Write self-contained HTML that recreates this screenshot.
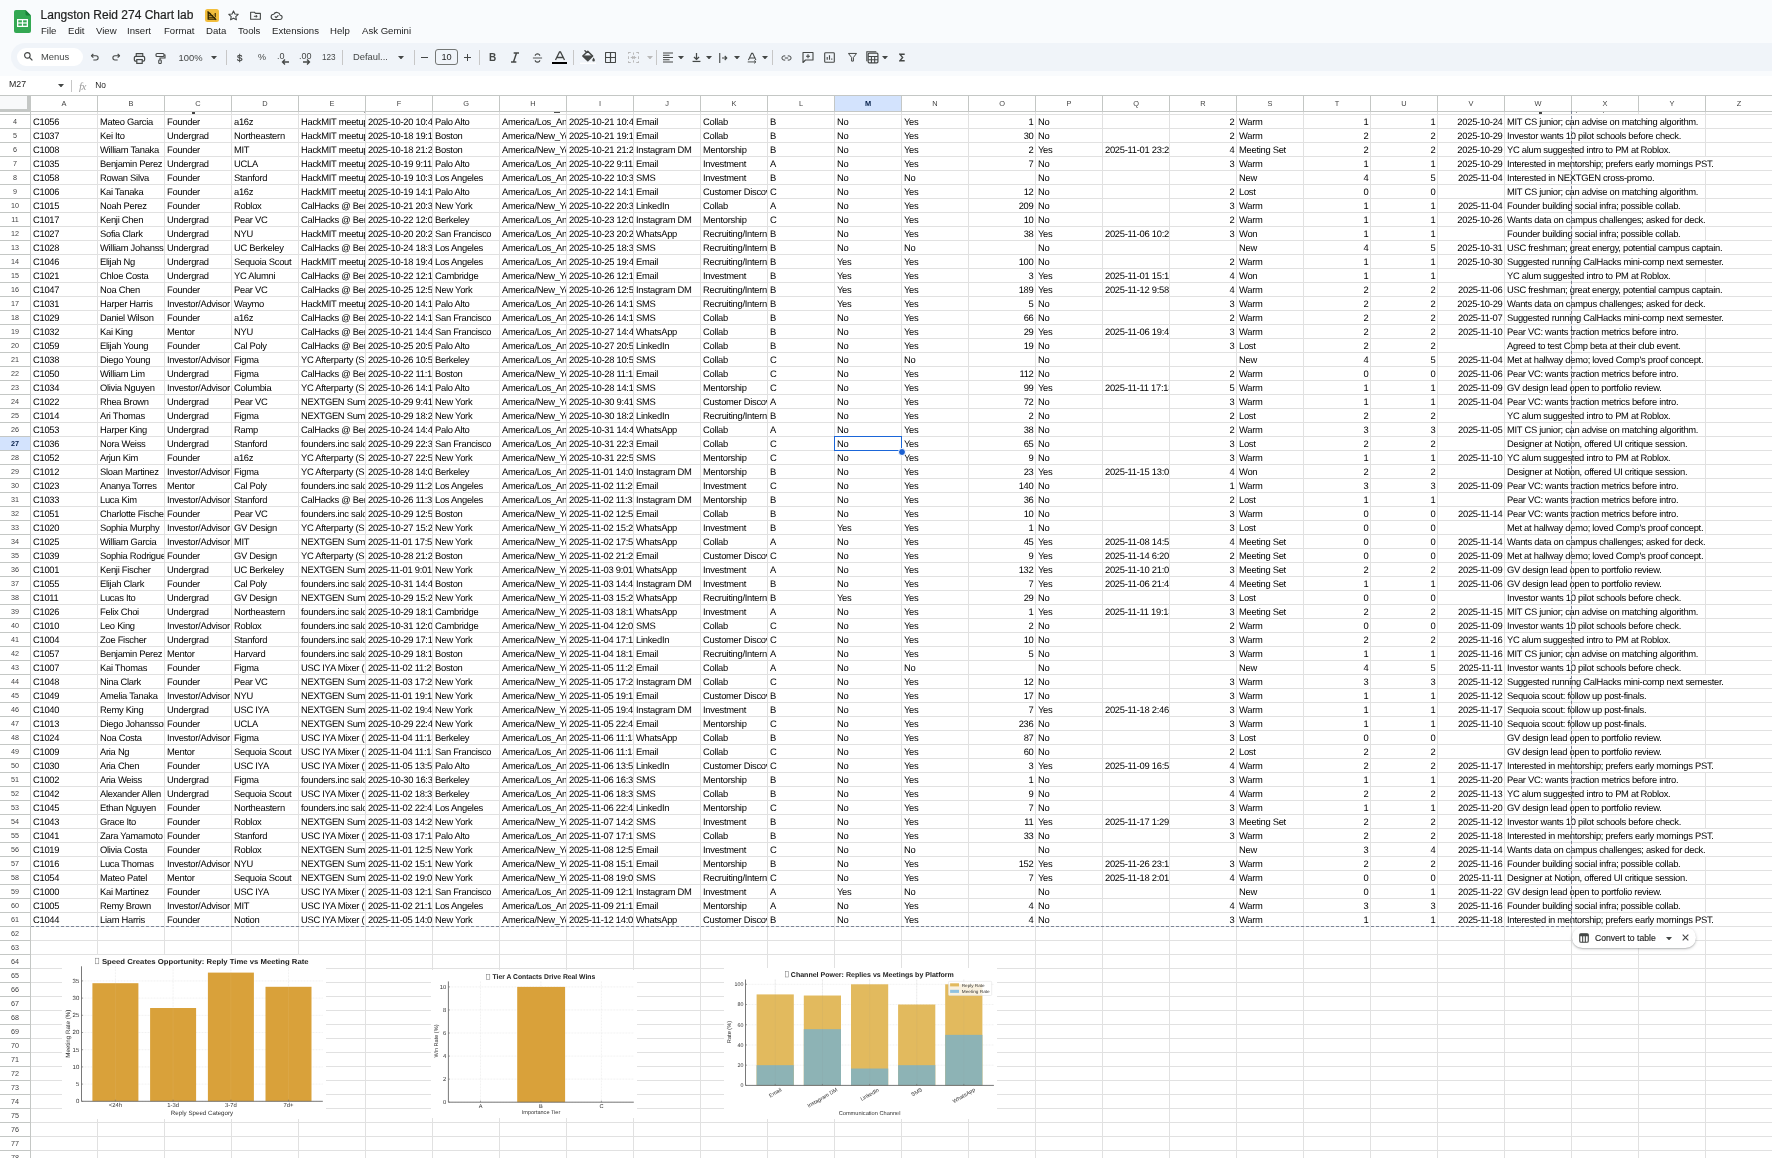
<!DOCTYPE html><html><head><meta charset="utf-8"><style>
*{margin:0;padding:0;box-sizing:border-box}
html,body{width:1772px;height:1158px;overflow:hidden;background:#fff;font-family:"Liberation Sans",sans-serif;color:#1f1f1f}
.a{position:absolute}
#top{position:absolute;left:0;top:0;width:1772px;height:76px;background:#f9fbfd}
.menu{position:absolute;top:25px;font-size:9.6px;color:#1f1f1f;white-space:nowrap}
#tb{position:absolute;left:11px;top:43px;width:1800px;height:28px;border-radius:14px;background:#f0f4f9}
.sep{position:absolute;top:50px;width:1px;height:15px;background:#c7c7c7}
.ic{position:absolute}
.t{position:absolute;z-index:2;font-size:9.4px;letter-spacing:-0.28px;text-rendering:geometricPrecision;line-height:14px;height:14px;white-space:nowrap;overflow:hidden;color:#000}
.r{text-align:right}
.vl{position:absolute;width:1px;background:#e1e1e1}
.hl{position:absolute;height:1px;background:#e1e1e1}
.hdr{position:absolute;top:96px;height:15px;line-height:15px;text-align:center;font-size:7.4px;color:#444}
.rn{position:absolute;left:0;width:30px;text-align:center;font-size:7.2px;line-height:16px;color:#444}
#root{position:absolute;left:0;top:0;width:1772px;height:1158px;will-change:transform}
</style></head><body><div id="root">
<div id="top"></div><svg class="a" style="left:14px;top:10px" width="17" height="23" viewBox="0 0 17 23">
<path d="M2 0 H11.5 L17 5.5 V21 a2 2 0 0 1 -2 2 H2 a2 2 0 0 1 -2 -2 V2 a2 2 0 0 1 2 -2z" fill="#34a853"/>
<path d="M11.5 0 L17 5.5 H13 a1.5 1.5 0 0 1 -1.5 -1.5z" fill="#188038"/>
<rect x="3" y="9" width="11" height="8" fill="#fff"/>
<rect x="4.3" y="10.3" width="3.6" height="2.1" fill="#34a853"/><rect x="9.1" y="10.3" width="3.6" height="2.1" fill="#34a853"/>
<rect x="4.3" y="13.6" width="3.6" height="2.1" fill="#34a853"/><rect x="9.1" y="13.6" width="3.6" height="2.1" fill="#34a853"/>
</svg><div class="a" style="left:40.6px;top:8.1px;font-size:12px;color:#1f1f1f;white-space:nowrap;-webkit-text-stroke:0.2px #1f1f1f">Langston Reid 274 Chart lab</div><svg class="a" style="left:205px;top:9px" width="14" height="13" viewBox="0 0 14 13"><rect x="0" y="0" width="14" height="13" rx="2.5" fill="#f2be3c"/>
<path d="M3.2 3v7.2h7.6" fill="none" stroke="#2b2100" stroke-width="1.3"/><path d="M3.2 4.3h3M3.2 6.3h5.5M3.2 8.3h7.3M10.2 4v5" stroke="#2b2100" stroke-width="1.1"/><path d="M2.6 2.3L11.2 10.9" stroke="#2b2100" stroke-width="1.2"/><path d="M3.6 1.6L11.9 9.9" stroke="#f2be3c" stroke-width="0.7"/></svg><svg class="a" style="left:227px;top:9px" width="13" height="13" viewBox="0 0 24 24"><path d="M12 3.5l2.6 5.6 6.1.7-4.5 4.1 1.2 6-5.4-3-5.4 3 1.2-6-4.5-4.1 6.1-.7z" fill="none" stroke="#444746" stroke-width="2" stroke-linejoin="round"/></svg><svg class="a" style="left:249px;top:9px" width="13" height="13" viewBox="0 0 24 24"><path d="M3 6h7l2 2h9v11H3z" fill="none" stroke="#444746" stroke-width="2" stroke-linejoin="round"/><path d="M9 13.5h6M12.5 11l2.5 2.5-2.5 2.5" fill="none" stroke="#444746" stroke-width="1.8"/></svg><svg class="a" style="left:270px;top:10px" width="13" height="11" viewBox="0 0 24 21"><path d="M6.5 18h12a4 4 0 0 0 .5-8A6.5 6.5 0 0 0 6.8 8.2 4.9 4.9 0 0 0 6.5 18z" fill="none" stroke="#444746" stroke-width="2.1"/><path d="M8.8 12.2l2.4 2.4 4.4-4.4" fill="none" stroke="#444746" stroke-width="2.1"/></svg><div class="menu" style="left:41px">File</div><div class="menu" style="left:68px">Edit</div><div class="menu" style="left:96px">View</div><div class="menu" style="left:127px">Insert</div><div class="menu" style="left:164px">Format</div><div class="menu" style="left:206px">Data</div><div class="menu" style="left:238px">Tools</div><div class="menu" style="left:272px">Extensions</div><div class="menu" style="left:330px">Help</div><div class="menu" style="left:362px">Ask Gemini</div><div id="tb"></div><div class="a" style="left:17px;top:48px;width:66px;height:18px;border-radius:9px;background:#fff"></div><svg class="a" style="left:23px;top:51px" width="11" height="11" viewBox="0 0 24 24"><circle cx="9.5" cy="9.5" r="6" fill="none" stroke="#444746" stroke-width="2.6"/><path d="M14 14l6.5 6.5" stroke="#444746" stroke-width="2.8"/></svg><div class="a" style="left:41px;top:51px;font-size:9.4px;color:#444746">Menus</div><svg class="a" style="left:90px;top:52.400000000000006px" width="10" height="10" viewBox="0 0 24 24"><path d="M8 4.5L3.5 9L8 13.5" fill="none" stroke="#444746" stroke-width="2.6" stroke-linejoin="round"/><path d="M4 9h10.5a5 5 0 0 1 0 10H8" fill="none" stroke="#444746" stroke-width="2.6"/></svg><svg class="a" style="left:111px;top:52.400000000000006px" width="10" height="10" viewBox="0 0 24 24"><path d="M16 4.5L20.5 9L16 13.5" fill="none" stroke="#444746" stroke-width="2.6" stroke-linejoin="round"/><path d="M20 9H9.5a5 5 0 0 0 0 10H16" fill="none" stroke="#444746" stroke-width="2.6"/></svg><svg class="a" style="left:133px;top:52.2px" width="13" height="13" viewBox="0 0 24 24"><path d="M6 8V3h12v5" fill="none" stroke="#444746" stroke-width="2"/><rect x="2.5" y="8" width="19" height="9" rx="2.5" fill="none" stroke="#444746" stroke-width="2.2"/><rect x="7" y="14" width="10" height="7" fill="#f0f4f9" stroke="#444746" stroke-width="2.2"/></svg><svg class="a" style="left:154px;top:52.2px" width="12" height="13" viewBox="0 0 24 24"><rect x="4" y="2" width="16" height="6" rx="2" fill="none" stroke="#444746" stroke-width="2.2"/><path d="M20 5h2v6h-10v4" fill="none" stroke="#444746" stroke-width="2.2"/><rect x="9.5" y="15" width="5" height="7" rx="1.5" fill="none" stroke="#444746" stroke-width="2.2"/></svg><div class="a" style="left:178.5px;top:51.5px;font-size:9.4px;color:#444746">100%</div><svg class="a" style="left:210.5px;top:55.8px" width="6" height="3.5" viewBox="0 0 7 4"><path d="M0 0h7L3.5 4z" fill="#444746"/></svg><div class="sep" style="left:226px"></div><div class="sep" style="left:342px"></div><div class="sep" style="left:414px"></div><div class="sep" style="left:479px"></div><div class="sep" style="left:573px"></div><div class="sep" style="left:656px"></div><div class="sep" style="left:772px"></div><div class="a" style="left:237px;top:51.5px;font-size:9.6px;color:#444746;-webkit-text-stroke:0.3px #444746">$</div><div class="a" style="left:258px;top:52px;font-size:9px;color:#444746">%</div><svg class="a" style="left:277px;top:51.2px" width="13" height="14" viewBox="0 0 13 14"><text x="0" y="8" font-size="9" font-family="Liberation Sans" fill="#444746">.0</text><path d="M12 11H5.5M8 8.5L5.5 11L8 13.5" fill="none" stroke="#444746" stroke-width="1.3"/></svg><svg class="a" style="left:299px;top:51.2px" width="13" height="14" viewBox="0 0 13 14"><text x="0" y="8" font-size="9" font-family="Liberation Sans" fill="#444746">.00</text><path d="M4 11h6.5M8 8.5L10.5 11L8 13.5" fill="none" stroke="#444746" stroke-width="1.3"/></svg><div class="a" style="left:322px;top:53px;font-size:8.2px;color:#444746">123</div><div class="a" style="left:353px;top:51px;font-size:9.4px;color:#444746">Defaul...</div><svg class="a" style="left:397.5px;top:55.8px" width="6" height="3.5" viewBox="0 0 7 4"><path d="M0 0h7L3.5 4z" fill="#444746"/></svg><div class="a" style="left:421px;top:57px;width:7px;height:1.3px;background:#444746"></div><div class="a" style="left:435px;top:49px;width:23px;height:16px;border:1px solid #747775;border-radius:3px;font-size:9.2px;line-height:14px;text-align:center;color:#1f1f1f">10</div><div class="a" style="left:464px;top:57px;width:7px;height:1.3px;background:#444746"></div><div class="a" style="left:467px;top:54px;width:1.3px;height:7px;background:#444746"></div><div class="a" style="left:489px;top:51.5px;font-size:10px;font-weight:bold;color:#444746">B</div><svg class="a" style="left:511px;top:51.7px" width="8" height="11" viewBox="0 0 9 12"><path d="M3 1h6M0 11h6M6.2 1L2.8 11" fill="none" stroke="#444746" stroke-width="1.6"/></svg><svg class="a" style="left:532px;top:52.2px" width="11" height="12" viewBox="0 0 24 24"><path d="M2 12h20" stroke="#444746" stroke-width="2"/><path d="M17 7c0-2.5-2.5-4-5-4s-5 1.5-5 4M7 17c0 2.5 2.5 4 5 4s5-1.5 5-4" fill="none" stroke="#444746" stroke-width="2.4"/></svg><svg class="a" style="left:552px;top:51.2px" width="15" height="13" viewBox="0 0 15 13"><path d="M3.5 9L7.5 1H8.5L12.5 9M5 6.5h6" fill="none" stroke="#444746" stroke-width="1.3"/><rect x="0" y="11" width="15" height="2" fill="#000"/></svg><svg class="a" style="left:580px;top:49.7px" width="16" height="14" viewBox="0 0 16 14"><path d="M2.8 6L7.8 1.2L12.6 6L7.8 10.8z" fill="none" stroke="#444746" stroke-width="1.5" stroke-linejoin="round"/><path d="M3.2 6.2h9" stroke="#444746" stroke-width="1.5"/><path d="M3.5 6.5L7.8 10.5L12 6.5z" fill="#444746"/><path d="M13.6 7.6c.9 1.4 1.3 2.1 1.3 2.7a1.3 1.3 0 0 1 -2.6 0c0-.6.4-1.3 1.3-2.7z" fill="#444746"/><path d="M4.5 0.3L6.8 2.4" stroke="#444746" stroke-width="1.3"/><rect x="0" y="12.6" width="16" height="1.6" fill="#fff"/></svg><svg class="a" style="left:605px;top:52.2px" width="11" height="11" viewBox="0 0 24 24"><rect x="1" y="1" width="22" height="22" rx="2" fill="none" stroke="#444746" stroke-width="2.6"/><path d="M12 1v22M1 12h22" stroke="#444746" stroke-width="2.6"/></svg><svg class="a" style="left:628px;top:52.2px" width="11" height="11" viewBox="0 0 24 24"><path d="M1 4V1h5M18 1h5v3M1 20v3h5M18 23h5v-3M1 9v6M23 9v6M12 1v5M12 18v5M6 12h12M9 9l3 3-3 3M15 9l-3 3 3 3" fill="none" stroke="#b9b9b9" stroke-width="2.2"/></svg><svg class="a" style="left:646.5px;top:55.8px" width="6" height="3.5" viewBox="0 0 7 4"><path d="M0 0h7L3.5 4z" fill="#b9b9b9"/></svg><svg class="a" style="left:663px;top:52.2px" width="10" height="11" viewBox="0 0 20 20"><path d="M0 1h20M0 5.5h13M0 10h20M0 14.5h13M0 19h20" stroke="#444746" stroke-width="2.2"/></svg><svg class="a" style="left:677.5px;top:55.8px" width="6" height="3.5" viewBox="0 0 7 4"><path d="M0 0h7L3.5 4z" fill="#444746"/></svg><svg class="a" style="left:692px;top:51.2px" width="9" height="13" viewBox="0 0 16 18"><path d="M8 1v11M3.5 8L8 12.5L12.5 8" fill="none" stroke="#444746" stroke-width="2.2"/><path d="M1 16h14" stroke="#444746" stroke-width="2.2"/></svg><svg class="a" style="left:705.5px;top:55.8px" width="6" height="3.5" viewBox="0 0 7 4"><path d="M0 0h7L3.5 4z" fill="#444746"/></svg><svg class="a" style="left:719px;top:52.2px" width="9" height="12" viewBox="0 0 18 20"><path d="M1.5 0v20M6 10h9M11.5 6l4 4-4 4" fill="none" stroke="#444746" stroke-width="2.2"/></svg><svg class="a" style="left:733.5px;top:55.8px" width="6" height="3.5" viewBox="0 0 7 4"><path d="M0 0h7L3.5 4z" fill="#444746"/></svg><svg class="a" style="left:747px;top:51.2px" width="10" height="14" viewBox="0 0 14 16"><path d="M2 11L6.5 1.5H8L12.5 11M4 8h8" fill="none" stroke="#444746" stroke-width="1.5"/><path d="M1 13.5h11M10 11.5l2.5 2-2.5 2" fill="none" stroke="#444746" stroke-width="1.3"/></svg><svg class="a" style="left:761.5px;top:55.8px" width="6" height="3.5" viewBox="0 0 7 4"><path d="M0 0h7L3.5 4z" fill="#444746"/></svg><svg class="a" style="left:781px;top:53.2px" width="11" height="10" viewBox="0 0 24 24"><path d="M9 7H6a5 5 0 0 0 0 10h3M15 7h3a5 5 0 0 1 0 10h-3M8 12h8" fill="none" stroke="#444746" stroke-width="2.4"/></svg><svg class="a" style="left:802px;top:51.2px" width="12" height="13" viewBox="0 0 24 24"><path d="M2 2h20v15H7l-5 5z" fill="none" stroke="#444746" stroke-width="2.2" stroke-linejoin="round"/><path d="M12 5.5v8M8 9.5h8" stroke="#444746" stroke-width="2.2"/></svg><svg class="a" style="left:824px;top:52.2px" width="11" height="11" viewBox="0 0 24 24"><rect x="1.5" y="1.5" width="21" height="21" rx="2" fill="none" stroke="#444746" stroke-width="2.4"/><path d="M7 17V11M12 17V7M17 17v-3" stroke="#444746" stroke-width="2.4"/></svg><svg class="a" style="left:848px;top:52.2px" width="9" height="11" viewBox="0 0 20 22"><path d="M1 2h18l-7 9v8h-4v-8z" fill="none" stroke="#444746" stroke-width="2.2" stroke-linejoin="round"/></svg><svg class="a" style="left:866px;top:51.2px" width="13" height="13" viewBox="0 0 24 24"><rect x="4" y="4" width="18" height="18" rx="2" fill="none" stroke="#444746" stroke-width="2.2"/><path d="M4 10h18M4 16h18M10 10v12M16 10v12" stroke="#444746" stroke-width="2"/><path d="M1.5 19V1.5H19" fill="none" stroke="#444746" stroke-width="2"/></svg><svg class="a" style="left:881.5px;top:55.8px" width="6" height="3.5" viewBox="0 0 7 4"><path d="M0 0h7L3.5 4z" fill="#444746"/></svg><svg class="a" style="left:899px;top:53.0px" width="6.5" height="9" viewBox="0 0 16 20"><path d="M14 2H2l7 8-7 8h12" fill="none" stroke="#444746" stroke-width="3.2" stroke-linejoin="miter"/></svg><div class="a" style="left:9px;top:79px;font-size:8.8px;color:#1f1f1f">M27</div><svg class="a" style="left:57.5px;top:83.8px" width="6" height="3.5" viewBox="0 0 7 4"><path d="M0 0h7L3.5 4z" fill="#444746"/></svg><div class="a" style="left:71px;top:80px;width:1px;height:12px;background:#c7c7c7"></div><div class="a" style="left:79px;top:79.5px;font-size:11px;font-style:italic;font-family:'Liberation Serif',serif;color:#9a9a9a;letter-spacing:-0.5px">fx</div><div class="a" style="left:95.3px;top:79.5px;font-size:8.4px;color:#1f1f1f">No</div><div class="a" style="left:0;top:95px;width:1772px;height:1px;background:#c4c7c5"></div><div class="a" style="left:0;top:111px;width:1772px;height:1px;background:#c4c7c5"></div><div class="a" style="left:0;top:96px;width:29px;height:15px;background:#f8f9fa"></div><div class="a" style="left:27px;top:96px;width:3px;height:16px;background:#c4c7c5"></div><div class="a" style="left:0;top:109px;width:30px;height:3px;background:#c4c7c5"></div><div class="a" style="left:834px;top:96px;width:67px;height:15px;background:#d3e3fd"></div><div class="a" style="left:30px;top:96px;width:1px;height:15px;background:#c4c7c5"></div><div class="hdr" style="left:31px;width:66px">A</div><div class="a" style="left:97px;top:96px;width:1px;height:15px;background:#c4c7c5"></div><div class="hdr" style="left:98px;width:66px">B</div><div class="a" style="left:164px;top:96px;width:1px;height:15px;background:#c4c7c5"></div><div class="hdr" style="left:165px;width:66px">C</div><div class="a" style="left:231px;top:96px;width:1px;height:15px;background:#c4c7c5"></div><div class="hdr" style="left:232px;width:66px">D</div><div class="a" style="left:298px;top:96px;width:1px;height:15px;background:#c4c7c5"></div><div class="hdr" style="left:299px;width:66px">E</div><div class="a" style="left:365px;top:96px;width:1px;height:15px;background:#c4c7c5"></div><div class="hdr" style="left:366px;width:66px">F</div><div class="a" style="left:432px;top:96px;width:1px;height:15px;background:#c4c7c5"></div><div class="hdr" style="left:433px;width:66px">G</div><div class="a" style="left:499px;top:96px;width:1px;height:15px;background:#c4c7c5"></div><div class="hdr" style="left:500px;width:66px">H</div><div class="a" style="left:566px;top:96px;width:1px;height:15px;background:#c4c7c5"></div><div class="hdr" style="left:567px;width:66px">I</div><div class="a" style="left:633px;top:96px;width:1px;height:15px;background:#c4c7c5"></div><div class="hdr" style="left:634px;width:66px">J</div><div class="a" style="left:700px;top:96px;width:1px;height:15px;background:#c4c7c5"></div><div class="hdr" style="left:701px;width:66px">K</div><div class="a" style="left:767px;top:96px;width:1px;height:15px;background:#c4c7c5"></div><div class="hdr" style="left:768px;width:66px">L</div><div class="a" style="left:834px;top:96px;width:1px;height:15px;background:#c4c7c5"></div><div class="hdr" style="left:835px;width:66px ;font-weight:bold;color:#041e49">M</div><div class="a" style="left:901px;top:96px;width:1px;height:15px;background:#c4c7c5"></div><div class="hdr" style="left:902px;width:66px">N</div><div class="a" style="left:968px;top:96px;width:1px;height:15px;background:#c4c7c5"></div><div class="hdr" style="left:969px;width:66px">O</div><div class="a" style="left:1035px;top:96px;width:1px;height:15px;background:#c4c7c5"></div><div class="hdr" style="left:1036px;width:66px">P</div><div class="a" style="left:1102px;top:96px;width:1px;height:15px;background:#c4c7c5"></div><div class="hdr" style="left:1103px;width:66px">Q</div><div class="a" style="left:1169px;top:96px;width:1px;height:15px;background:#c4c7c5"></div><div class="hdr" style="left:1170px;width:66px">R</div><div class="a" style="left:1236px;top:96px;width:1px;height:15px;background:#c4c7c5"></div><div class="hdr" style="left:1237px;width:66px">S</div><div class="a" style="left:1303px;top:96px;width:1px;height:15px;background:#c4c7c5"></div><div class="hdr" style="left:1304px;width:66px">T</div><div class="a" style="left:1370px;top:96px;width:1px;height:15px;background:#c4c7c5"></div><div class="hdr" style="left:1371px;width:66px">U</div><div class="a" style="left:1437px;top:96px;width:1px;height:15px;background:#c4c7c5"></div><div class="hdr" style="left:1438px;width:66px">V</div><div class="a" style="left:1504px;top:96px;width:1px;height:15px;background:#c4c7c5"></div><div class="hdr" style="left:1505px;width:66px">W</div><div class="a" style="left:1571px;top:96px;width:1px;height:15px;background:#c4c7c5"></div><div class="hdr" style="left:1572px;width:66px">X</div><div class="a" style="left:1638px;top:96px;width:1px;height:15px;background:#c4c7c5"></div><div class="hdr" style="left:1639px;width:66px">Y</div><div class="a" style="left:1705px;top:96px;width:1px;height:15px;background:#c4c7c5"></div><div class="hdr" style="left:1706px;width:66px">Z</div><div class="hl" style="left:30px;top:114px;width:1742px"></div><div class="hl" style="left:0;top:114px;width:30px;background:#c4c7c5"></div><div class="hl" style="left:30px;top:128px;width:1742px"></div><div class="hl" style="left:0;top:128px;width:30px;background:#c4c7c5"></div><div class="hl" style="left:30px;top:142px;width:1742px"></div><div class="hl" style="left:0;top:142px;width:30px;background:#c4c7c5"></div><div class="hl" style="left:30px;top:156px;width:1742px"></div><div class="hl" style="left:0;top:156px;width:30px;background:#c4c7c5"></div><div class="hl" style="left:30px;top:170px;width:1742px"></div><div class="hl" style="left:0;top:170px;width:30px;background:#c4c7c5"></div><div class="hl" style="left:30px;top:184px;width:1742px"></div><div class="hl" style="left:0;top:184px;width:30px;background:#c4c7c5"></div><div class="hl" style="left:30px;top:198px;width:1742px"></div><div class="hl" style="left:0;top:198px;width:30px;background:#c4c7c5"></div><div class="hl" style="left:30px;top:212px;width:1742px"></div><div class="hl" style="left:0;top:212px;width:30px;background:#c4c7c5"></div><div class="hl" style="left:30px;top:226px;width:1742px"></div><div class="hl" style="left:0;top:226px;width:30px;background:#c4c7c5"></div><div class="hl" style="left:30px;top:240px;width:1742px"></div><div class="hl" style="left:0;top:240px;width:30px;background:#c4c7c5"></div><div class="hl" style="left:30px;top:254px;width:1742px"></div><div class="hl" style="left:0;top:254px;width:30px;background:#c4c7c5"></div><div class="hl" style="left:30px;top:268px;width:1742px"></div><div class="hl" style="left:0;top:268px;width:30px;background:#c4c7c5"></div><div class="hl" style="left:30px;top:282px;width:1742px"></div><div class="hl" style="left:0;top:282px;width:30px;background:#c4c7c5"></div><div class="hl" style="left:30px;top:296px;width:1742px"></div><div class="hl" style="left:0;top:296px;width:30px;background:#c4c7c5"></div><div class="hl" style="left:30px;top:310px;width:1742px"></div><div class="hl" style="left:0;top:310px;width:30px;background:#c4c7c5"></div><div class="hl" style="left:30px;top:324px;width:1742px"></div><div class="hl" style="left:0;top:324px;width:30px;background:#c4c7c5"></div><div class="hl" style="left:30px;top:338px;width:1742px"></div><div class="hl" style="left:0;top:338px;width:30px;background:#c4c7c5"></div><div class="hl" style="left:30px;top:352px;width:1742px"></div><div class="hl" style="left:0;top:352px;width:30px;background:#c4c7c5"></div><div class="hl" style="left:30px;top:366px;width:1742px"></div><div class="hl" style="left:0;top:366px;width:30px;background:#c4c7c5"></div><div class="hl" style="left:30px;top:380px;width:1742px"></div><div class="hl" style="left:0;top:380px;width:30px;background:#c4c7c5"></div><div class="hl" style="left:30px;top:394px;width:1742px"></div><div class="hl" style="left:0;top:394px;width:30px;background:#c4c7c5"></div><div class="hl" style="left:30px;top:408px;width:1742px"></div><div class="hl" style="left:0;top:408px;width:30px;background:#c4c7c5"></div><div class="hl" style="left:30px;top:422px;width:1742px"></div><div class="hl" style="left:0;top:422px;width:30px;background:#c4c7c5"></div><div class="hl" style="left:30px;top:436px;width:1742px"></div><div class="hl" style="left:0;top:436px;width:30px;background:#c4c7c5"></div><div class="hl" style="left:30px;top:450px;width:1742px"></div><div class="hl" style="left:0;top:450px;width:30px;background:#c4c7c5"></div><div class="hl" style="left:30px;top:464px;width:1742px"></div><div class="hl" style="left:0;top:464px;width:30px;background:#c4c7c5"></div><div class="hl" style="left:30px;top:478px;width:1742px"></div><div class="hl" style="left:0;top:478px;width:30px;background:#c4c7c5"></div><div class="hl" style="left:30px;top:492px;width:1742px"></div><div class="hl" style="left:0;top:492px;width:30px;background:#c4c7c5"></div><div class="hl" style="left:30px;top:506px;width:1742px"></div><div class="hl" style="left:0;top:506px;width:30px;background:#c4c7c5"></div><div class="hl" style="left:30px;top:520px;width:1742px"></div><div class="hl" style="left:0;top:520px;width:30px;background:#c4c7c5"></div><div class="hl" style="left:30px;top:534px;width:1742px"></div><div class="hl" style="left:0;top:534px;width:30px;background:#c4c7c5"></div><div class="hl" style="left:30px;top:548px;width:1742px"></div><div class="hl" style="left:0;top:548px;width:30px;background:#c4c7c5"></div><div class="hl" style="left:30px;top:562px;width:1742px"></div><div class="hl" style="left:0;top:562px;width:30px;background:#c4c7c5"></div><div class="hl" style="left:30px;top:576px;width:1742px"></div><div class="hl" style="left:0;top:576px;width:30px;background:#c4c7c5"></div><div class="hl" style="left:30px;top:590px;width:1742px"></div><div class="hl" style="left:0;top:590px;width:30px;background:#c4c7c5"></div><div class="hl" style="left:30px;top:604px;width:1742px"></div><div class="hl" style="left:0;top:604px;width:30px;background:#c4c7c5"></div><div class="hl" style="left:30px;top:618px;width:1742px"></div><div class="hl" style="left:0;top:618px;width:30px;background:#c4c7c5"></div><div class="hl" style="left:30px;top:632px;width:1742px"></div><div class="hl" style="left:0;top:632px;width:30px;background:#c4c7c5"></div><div class="hl" style="left:30px;top:646px;width:1742px"></div><div class="hl" style="left:0;top:646px;width:30px;background:#c4c7c5"></div><div class="hl" style="left:30px;top:660px;width:1742px"></div><div class="hl" style="left:0;top:660px;width:30px;background:#c4c7c5"></div><div class="hl" style="left:30px;top:674px;width:1742px"></div><div class="hl" style="left:0;top:674px;width:30px;background:#c4c7c5"></div><div class="hl" style="left:30px;top:688px;width:1742px"></div><div class="hl" style="left:0;top:688px;width:30px;background:#c4c7c5"></div><div class="hl" style="left:30px;top:702px;width:1742px"></div><div class="hl" style="left:0;top:702px;width:30px;background:#c4c7c5"></div><div class="hl" style="left:30px;top:716px;width:1742px"></div><div class="hl" style="left:0;top:716px;width:30px;background:#c4c7c5"></div><div class="hl" style="left:30px;top:730px;width:1742px"></div><div class="hl" style="left:0;top:730px;width:30px;background:#c4c7c5"></div><div class="hl" style="left:30px;top:744px;width:1742px"></div><div class="hl" style="left:0;top:744px;width:30px;background:#c4c7c5"></div><div class="hl" style="left:30px;top:758px;width:1742px"></div><div class="hl" style="left:0;top:758px;width:30px;background:#c4c7c5"></div><div class="hl" style="left:30px;top:772px;width:1742px"></div><div class="hl" style="left:0;top:772px;width:30px;background:#c4c7c5"></div><div class="hl" style="left:30px;top:786px;width:1742px"></div><div class="hl" style="left:0;top:786px;width:30px;background:#c4c7c5"></div><div class="hl" style="left:30px;top:800px;width:1742px"></div><div class="hl" style="left:0;top:800px;width:30px;background:#c4c7c5"></div><div class="hl" style="left:30px;top:814px;width:1742px"></div><div class="hl" style="left:0;top:814px;width:30px;background:#c4c7c5"></div><div class="hl" style="left:30px;top:828px;width:1742px"></div><div class="hl" style="left:0;top:828px;width:30px;background:#c4c7c5"></div><div class="hl" style="left:30px;top:842px;width:1742px"></div><div class="hl" style="left:0;top:842px;width:30px;background:#c4c7c5"></div><div class="hl" style="left:30px;top:856px;width:1742px"></div><div class="hl" style="left:0;top:856px;width:30px;background:#c4c7c5"></div><div class="hl" style="left:30px;top:870px;width:1742px"></div><div class="hl" style="left:0;top:870px;width:30px;background:#c4c7c5"></div><div class="hl" style="left:30px;top:884px;width:1742px"></div><div class="hl" style="left:0;top:884px;width:30px;background:#c4c7c5"></div><div class="hl" style="left:30px;top:898px;width:1742px"></div><div class="hl" style="left:0;top:898px;width:30px;background:#c4c7c5"></div><div class="hl" style="left:30px;top:912px;width:1742px"></div><div class="hl" style="left:0;top:912px;width:30px;background:#c4c7c5"></div><div class="hl" style="left:30px;top:926px;width:1742px"></div><div class="hl" style="left:0;top:926px;width:30px;background:#c4c7c5"></div><div class="hl" style="left:30px;top:940px;width:1742px"></div><div class="hl" style="left:0;top:940px;width:30px;background:#c4c7c5"></div><div class="hl" style="left:30px;top:954px;width:1742px"></div><div class="hl" style="left:0;top:954px;width:30px;background:#c4c7c5"></div><div class="hl" style="left:30px;top:968px;width:1742px"></div><div class="hl" style="left:0;top:968px;width:30px;background:#c4c7c5"></div><div class="hl" style="left:30px;top:982px;width:1742px"></div><div class="hl" style="left:0;top:982px;width:30px;background:#c4c7c5"></div><div class="hl" style="left:30px;top:996px;width:1742px"></div><div class="hl" style="left:0;top:996px;width:30px;background:#c4c7c5"></div><div class="hl" style="left:30px;top:1010px;width:1742px"></div><div class="hl" style="left:0;top:1010px;width:30px;background:#c4c7c5"></div><div class="hl" style="left:30px;top:1024px;width:1742px"></div><div class="hl" style="left:0;top:1024px;width:30px;background:#c4c7c5"></div><div class="hl" style="left:30px;top:1038px;width:1742px"></div><div class="hl" style="left:0;top:1038px;width:30px;background:#c4c7c5"></div><div class="hl" style="left:30px;top:1052px;width:1742px"></div><div class="hl" style="left:0;top:1052px;width:30px;background:#c4c7c5"></div><div class="hl" style="left:30px;top:1066px;width:1742px"></div><div class="hl" style="left:0;top:1066px;width:30px;background:#c4c7c5"></div><div class="hl" style="left:30px;top:1080px;width:1742px"></div><div class="hl" style="left:0;top:1080px;width:30px;background:#c4c7c5"></div><div class="hl" style="left:30px;top:1094px;width:1742px"></div><div class="hl" style="left:0;top:1094px;width:30px;background:#c4c7c5"></div><div class="hl" style="left:30px;top:1108px;width:1742px"></div><div class="hl" style="left:0;top:1108px;width:30px;background:#c4c7c5"></div><div class="hl" style="left:30px;top:1122px;width:1742px"></div><div class="hl" style="left:0;top:1122px;width:30px;background:#c4c7c5"></div><div class="hl" style="left:30px;top:1136px;width:1742px"></div><div class="hl" style="left:0;top:1136px;width:30px;background:#c4c7c5"></div><div class="hl" style="left:30px;top:1150px;width:1742px"></div><div class="hl" style="left:0;top:1150px;width:30px;background:#c4c7c5"></div><div class="vl" style="left:30px;top:112px;height:1046px;background:#c4c7c5"></div><div class="vl" style="left:97px;top:112px;height:1046px;background:#e1e1e1"></div><div class="vl" style="left:164px;top:112px;height:1046px;background:#e1e1e1"></div><div class="vl" style="left:231px;top:112px;height:1046px;background:#e1e1e1"></div><div class="vl" style="left:298px;top:112px;height:1046px;background:#e1e1e1"></div><div class="vl" style="left:365px;top:112px;height:1046px;background:#e1e1e1"></div><div class="vl" style="left:432px;top:112px;height:1046px;background:#e1e1e1"></div><div class="vl" style="left:499px;top:112px;height:1046px;background:#e1e1e1"></div><div class="vl" style="left:566px;top:112px;height:1046px;background:#e1e1e1"></div><div class="vl" style="left:633px;top:112px;height:1046px;background:#e1e1e1"></div><div class="vl" style="left:700px;top:112px;height:1046px;background:#e1e1e1"></div><div class="vl" style="left:767px;top:112px;height:1046px;background:#e1e1e1"></div><div class="vl" style="left:834px;top:112px;height:1046px;background:#e1e1e1"></div><div class="vl" style="left:901px;top:112px;height:1046px;background:#e1e1e1"></div><div class="vl" style="left:968px;top:112px;height:1046px;background:#e1e1e1"></div><div class="vl" style="left:1035px;top:112px;height:1046px;background:#e1e1e1"></div><div class="vl" style="left:1102px;top:112px;height:1046px;background:#e1e1e1"></div><div class="vl" style="left:1169px;top:112px;height:1046px;background:#e1e1e1"></div><div class="vl" style="left:1236px;top:112px;height:1046px;background:#e1e1e1"></div><div class="vl" style="left:1303px;top:112px;height:1046px;background:#e1e1e1"></div><div class="vl" style="left:1370px;top:112px;height:1046px;background:#e1e1e1"></div><div class="vl" style="left:1437px;top:112px;height:1046px;background:#e1e1e1"></div><div class="vl" style="left:1504px;top:112px;height:1046px;background:#e1e1e1"></div><div class="vl" style="left:1571px;top:112px;height:1046px;background:#e1e1e1"></div><div class="vl" style="left:1638px;top:112px;height:1046px;background:#e1e1e1"></div><div class="vl" style="left:1705px;top:112px;height:1046px;background:#e1e1e1"></div><div class="rn" style="top:114px">4</div><div class="rn" style="top:128px">5</div><div class="rn" style="top:142px">6</div><div class="rn" style="top:156px">7</div><div class="rn" style="top:170px">8</div><div class="rn" style="top:184px">9</div><div class="rn" style="top:198px">10</div><div class="rn" style="top:212px">11</div><div class="rn" style="top:226px">12</div><div class="rn" style="top:240px">13</div><div class="rn" style="top:254px">14</div><div class="rn" style="top:268px">15</div><div class="rn" style="top:282px">16</div><div class="rn" style="top:296px">17</div><div class="rn" style="top:310px">18</div><div class="rn" style="top:324px">19</div><div class="rn" style="top:338px">20</div><div class="rn" style="top:352px">21</div><div class="rn" style="top:366px">22</div><div class="rn" style="top:380px">23</div><div class="rn" style="top:394px">24</div><div class="rn" style="top:408px">25</div><div class="rn" style="top:422px">26</div><div class="a" style="left:0;top:437px;width:30px;height:13px;background:#d3e3fd"></div><div class="rn" style="top:436px;font-weight:bold;color:#041e49">27</div><div class="rn" style="top:450px">28</div><div class="rn" style="top:464px">29</div><div class="rn" style="top:478px">30</div><div class="rn" style="top:492px">31</div><div class="rn" style="top:506px">32</div><div class="rn" style="top:520px">33</div><div class="rn" style="top:534px">34</div><div class="rn" style="top:548px">35</div><div class="rn" style="top:562px">36</div><div class="rn" style="top:576px">37</div><div class="rn" style="top:590px">38</div><div class="rn" style="top:604px">39</div><div class="rn" style="top:618px">40</div><div class="rn" style="top:632px">41</div><div class="rn" style="top:646px">42</div><div class="rn" style="top:660px">43</div><div class="rn" style="top:674px">44</div><div class="rn" style="top:688px">45</div><div class="rn" style="top:702px">46</div><div class="rn" style="top:716px">47</div><div class="rn" style="top:730px">48</div><div class="rn" style="top:744px">49</div><div class="rn" style="top:758px">50</div><div class="rn" style="top:772px">51</div><div class="rn" style="top:786px">52</div><div class="rn" style="top:800px">53</div><div class="rn" style="top:814px">54</div><div class="rn" style="top:828px">55</div><div class="rn" style="top:842px">56</div><div class="rn" style="top:856px">57</div><div class="rn" style="top:870px">58</div><div class="rn" style="top:884px">59</div><div class="rn" style="top:898px">60</div><div class="rn" style="top:912px">61</div><div class="rn" style="top:926px">62</div><div class="rn" style="top:940px">63</div><div class="rn" style="top:954px">64</div><div class="rn" style="top:968px">65</div><div class="rn" style="top:982px">66</div><div class="rn" style="top:996px">67</div><div class="rn" style="top:1010px">68</div><div class="rn" style="top:1024px">69</div><div class="rn" style="top:1038px">70</div><div class="rn" style="top:1052px">71</div><div class="rn" style="top:1066px">72</div><div class="rn" style="top:1080px">73</div><div class="rn" style="top:1094px">74</div><div class="rn" style="top:1108px">75</div><div class="rn" style="top:1122px">76</div><div class="rn" style="top:1136px">77</div><div class="rn" style="top:1150px">78</div><div class="t" style="left:33px;top:115px;width:64px">C1056</div><div class="t" style="left:100px;top:115px;width:64px">Mateo Garcia</div><div class="t" style="left:167px;top:115px;width:64px">Founder</div><div class="t" style="left:234px;top:115px;width:64px">a16z</div><div class="t" style="left:301px;top:115px;width:64px">HackMIT meetup</div><div class="t" style="left:368px;top:115px;width:64px">2025-10-20 10:45</div><div class="t" style="left:435px;top:115px;width:64px">Palo Alto</div><div class="t" style="left:502px;top:115px;width:64px">America/Los_Angeles</div><div class="t" style="left:569px;top:115px;width:64px">2025-10-21 10:45</div><div class="t" style="left:636px;top:115px;width:64px">Email</div><div class="t" style="left:703px;top:115px;width:64px">Collab</div><div class="t" style="left:770px;top:115px;width:64px">B</div><div class="t" style="left:837px;top:115px;width:64px">No</div><div class="t" style="left:904px;top:115px;width:64px">Yes</div><div class="t r" style="left:969px;top:115px;width:64.5px">1</div><div class="t" style="left:1038px;top:115px;width:64px">No</div><div class="t r" style="left:1170px;top:115px;width:64.5px">2</div><div class="t" style="left:1239px;top:115px;width:64px">Warm</div><div class="t r" style="left:1304px;top:115px;width:64.5px">1</div><div class="t r" style="left:1371px;top:115px;width:64.5px">1</div><div class="t r" style="left:1438px;top:115px;width:64.5px">2025-10-24</div><div class="t" style="left:1507px;top:115px;width:260px;overflow:visible">MIT CS junior; can advise on matching algorithm.</div><div class="t" style="left:33px;top:129px;width:64px">C1037</div><div class="t" style="left:100px;top:129px;width:64px">Kei Ito</div><div class="t" style="left:167px;top:129px;width:64px">Undergrad</div><div class="t" style="left:234px;top:129px;width:64px">Northeastern</div><div class="t" style="left:301px;top:129px;width:64px">HackMIT meetup</div><div class="t" style="left:368px;top:129px;width:64px">2025-10-18 19:12</div><div class="t" style="left:435px;top:129px;width:64px">Boston</div><div class="t" style="left:502px;top:129px;width:64px">America/New_York</div><div class="t" style="left:569px;top:129px;width:64px">2025-10-21 19:12</div><div class="t" style="left:636px;top:129px;width:64px">Email</div><div class="t" style="left:703px;top:129px;width:64px">Collab</div><div class="t" style="left:770px;top:129px;width:64px">B</div><div class="t" style="left:837px;top:129px;width:64px">No</div><div class="t" style="left:904px;top:129px;width:64px">Yes</div><div class="t r" style="left:969px;top:129px;width:64.5px">30</div><div class="t" style="left:1038px;top:129px;width:64px">No</div><div class="t r" style="left:1170px;top:129px;width:64.5px">2</div><div class="t" style="left:1239px;top:129px;width:64px">Warm</div><div class="t r" style="left:1304px;top:129px;width:64.5px">2</div><div class="t r" style="left:1371px;top:129px;width:64.5px">2</div><div class="t r" style="left:1438px;top:129px;width:64.5px">2025-10-29</div><div class="t" style="left:1507px;top:129px;width:260px;overflow:visible">Investor wants 10 pilot schools before check.</div><div class="t" style="left:33px;top:143px;width:64px">C1008</div><div class="t" style="left:100px;top:143px;width:64px">William Tanaka</div><div class="t" style="left:167px;top:143px;width:64px">Founder</div><div class="t" style="left:234px;top:143px;width:64px">MIT</div><div class="t" style="left:301px;top:143px;width:64px">HackMIT meetup</div><div class="t" style="left:368px;top:143px;width:64px">2025-10-18 21:25</div><div class="t" style="left:435px;top:143px;width:64px">Boston</div><div class="t" style="left:502px;top:143px;width:64px">America/New_York</div><div class="t" style="left:569px;top:143px;width:64px">2025-10-21 21:25</div><div class="t" style="left:636px;top:143px;width:64px">Instagram DM</div><div class="t" style="left:703px;top:143px;width:64px">Mentorship</div><div class="t" style="left:770px;top:143px;width:64px">B</div><div class="t" style="left:837px;top:143px;width:64px">No</div><div class="t" style="left:904px;top:143px;width:64px">Yes</div><div class="t r" style="left:969px;top:143px;width:64.5px">2</div><div class="t" style="left:1038px;top:143px;width:64px">Yes</div><div class="t" style="left:1105px;top:143px;width:64px">2025-11-01 23:25</div><div class="t r" style="left:1170px;top:143px;width:64.5px">4</div><div class="t" style="left:1239px;top:143px;width:64px">Meeting Set</div><div class="t r" style="left:1304px;top:143px;width:64.5px">2</div><div class="t r" style="left:1371px;top:143px;width:64.5px">2</div><div class="t r" style="left:1438px;top:143px;width:64.5px">2025-10-29</div><div class="t" style="left:1507px;top:143px;width:260px;overflow:visible">YC alum suggested intro to PM at Roblox.</div><div class="t" style="left:33px;top:157px;width:64px">C1035</div><div class="t" style="left:100px;top:157px;width:64px">Benjamin Perez</div><div class="t" style="left:167px;top:157px;width:64px">Undergrad</div><div class="t" style="left:234px;top:157px;width:64px">UCLA</div><div class="t" style="left:301px;top:157px;width:64px">HackMIT meetup</div><div class="t" style="left:368px;top:157px;width:64px">2025-10-19 9:11</div><div class="t" style="left:435px;top:157px;width:64px">Palo Alto</div><div class="t" style="left:502px;top:157px;width:64px">America/Los_Angeles</div><div class="t" style="left:569px;top:157px;width:64px">2025-10-22 9:11</div><div class="t" style="left:636px;top:157px;width:64px">Email</div><div class="t" style="left:703px;top:157px;width:64px">Investment</div><div class="t" style="left:770px;top:157px;width:64px">A</div><div class="t" style="left:837px;top:157px;width:64px">No</div><div class="t" style="left:904px;top:157px;width:64px">Yes</div><div class="t r" style="left:969px;top:157px;width:64.5px">7</div><div class="t" style="left:1038px;top:157px;width:64px">No</div><div class="t r" style="left:1170px;top:157px;width:64.5px">3</div><div class="t" style="left:1239px;top:157px;width:64px">Warm</div><div class="t r" style="left:1304px;top:157px;width:64.5px">1</div><div class="t r" style="left:1371px;top:157px;width:64.5px">1</div><div class="t r" style="left:1438px;top:157px;width:64.5px">2025-10-29</div><div class="t" style="left:1507px;top:157px;width:260px;overflow:visible">Interested in mentorship; prefers early mornings PST.</div><div class="t" style="left:33px;top:171px;width:64px">C1058</div><div class="t" style="left:100px;top:171px;width:64px">Rowan Silva</div><div class="t" style="left:167px;top:171px;width:64px">Founder</div><div class="t" style="left:234px;top:171px;width:64px">Stanford</div><div class="t" style="left:301px;top:171px;width:64px">HackMIT meetup</div><div class="t" style="left:368px;top:171px;width:64px">2025-10-19 10:33</div><div class="t" style="left:435px;top:171px;width:64px">Los Angeles</div><div class="t" style="left:502px;top:171px;width:64px">America/Los_Angeles</div><div class="t" style="left:569px;top:171px;width:64px">2025-10-22 10:33</div><div class="t" style="left:636px;top:171px;width:64px">SMS</div><div class="t" style="left:703px;top:171px;width:64px">Investment</div><div class="t" style="left:770px;top:171px;width:64px">B</div><div class="t" style="left:837px;top:171px;width:64px">No</div><div class="t" style="left:904px;top:171px;width:64px">No</div><div class="t" style="left:1038px;top:171px;width:64px">No</div><div class="t" style="left:1239px;top:171px;width:64px">New</div><div class="t r" style="left:1304px;top:171px;width:64.5px">4</div><div class="t r" style="left:1371px;top:171px;width:64.5px">5</div><div class="t r" style="left:1438px;top:171px;width:64.5px">2025-11-04</div><div class="t" style="left:1507px;top:171px;width:260px;overflow:visible">Interested in NEXTGEN cross-promo.</div><div class="t" style="left:33px;top:185px;width:64px">C1006</div><div class="t" style="left:100px;top:185px;width:64px">Kai Tanaka</div><div class="t" style="left:167px;top:185px;width:64px">Founder</div><div class="t" style="left:234px;top:185px;width:64px">a16z</div><div class="t" style="left:301px;top:185px;width:64px">HackMIT meetup</div><div class="t" style="left:368px;top:185px;width:64px">2025-10-19 14:18</div><div class="t" style="left:435px;top:185px;width:64px">Palo Alto</div><div class="t" style="left:502px;top:185px;width:64px">America/Los_Angeles</div><div class="t" style="left:569px;top:185px;width:64px">2025-10-22 14:18</div><div class="t" style="left:636px;top:185px;width:64px">Email</div><div class="t" style="left:703px;top:185px;width:64px">Customer Discovery</div><div class="t" style="left:770px;top:185px;width:64px">C</div><div class="t" style="left:837px;top:185px;width:64px">No</div><div class="t" style="left:904px;top:185px;width:64px">Yes</div><div class="t r" style="left:969px;top:185px;width:64.5px">12</div><div class="t" style="left:1038px;top:185px;width:64px">No</div><div class="t r" style="left:1170px;top:185px;width:64.5px">2</div><div class="t" style="left:1239px;top:185px;width:64px">Lost</div><div class="t r" style="left:1304px;top:185px;width:64.5px">0</div><div class="t r" style="left:1371px;top:185px;width:64.5px">0</div><div class="t" style="left:1507px;top:185px;width:260px;overflow:visible">MIT CS junior; can advise on matching algorithm.</div><div class="t" style="left:33px;top:199px;width:64px">C1015</div><div class="t" style="left:100px;top:199px;width:64px">Noah Perez</div><div class="t" style="left:167px;top:199px;width:64px">Founder</div><div class="t" style="left:234px;top:199px;width:64px">Roblox</div><div class="t" style="left:301px;top:199px;width:64px">CalHacks @ Berkeley</div><div class="t" style="left:368px;top:199px;width:64px">2025-10-21 20:33</div><div class="t" style="left:435px;top:199px;width:64px">New York</div><div class="t" style="left:502px;top:199px;width:64px">America/New_York</div><div class="t" style="left:569px;top:199px;width:64px">2025-10-22 20:33</div><div class="t" style="left:636px;top:199px;width:64px">LinkedIn</div><div class="t" style="left:703px;top:199px;width:64px">Collab</div><div class="t" style="left:770px;top:199px;width:64px">A</div><div class="t" style="left:837px;top:199px;width:64px">No</div><div class="t" style="left:904px;top:199px;width:64px">Yes</div><div class="t r" style="left:969px;top:199px;width:64.5px">209</div><div class="t" style="left:1038px;top:199px;width:64px">No</div><div class="t r" style="left:1170px;top:199px;width:64.5px">3</div><div class="t" style="left:1239px;top:199px;width:64px">Warm</div><div class="t r" style="left:1304px;top:199px;width:64.5px">1</div><div class="t r" style="left:1371px;top:199px;width:64.5px">1</div><div class="t r" style="left:1438px;top:199px;width:64.5px">2025-11-04</div><div class="t" style="left:1507px;top:199px;width:260px;overflow:visible">Founder building social infra; possible collab.</div><div class="t" style="left:33px;top:213px;width:64px">C1017</div><div class="t" style="left:100px;top:213px;width:64px">Kenji Chen</div><div class="t" style="left:167px;top:213px;width:64px">Undergrad</div><div class="t" style="left:234px;top:213px;width:64px">Pear VC</div><div class="t" style="left:301px;top:213px;width:64px">CalHacks @ Berkeley</div><div class="t" style="left:368px;top:213px;width:64px">2025-10-22 12:05</div><div class="t" style="left:435px;top:213px;width:64px">Berkeley</div><div class="t" style="left:502px;top:213px;width:64px">America/Los_Angeles</div><div class="t" style="left:569px;top:213px;width:64px">2025-10-23 12:05</div><div class="t" style="left:636px;top:213px;width:64px">Instagram DM</div><div class="t" style="left:703px;top:213px;width:64px">Mentorship</div><div class="t" style="left:770px;top:213px;width:64px">C</div><div class="t" style="left:837px;top:213px;width:64px">No</div><div class="t" style="left:904px;top:213px;width:64px">Yes</div><div class="t r" style="left:969px;top:213px;width:64.5px">10</div><div class="t" style="left:1038px;top:213px;width:64px">No</div><div class="t r" style="left:1170px;top:213px;width:64.5px">2</div><div class="t" style="left:1239px;top:213px;width:64px">Warm</div><div class="t r" style="left:1304px;top:213px;width:64.5px">1</div><div class="t r" style="left:1371px;top:213px;width:64.5px">1</div><div class="t r" style="left:1438px;top:213px;width:64.5px">2025-10-26</div><div class="t" style="left:1507px;top:213px;width:260px;overflow:visible">Wants data on campus challenges; asked for deck.</div><div class="t" style="left:33px;top:227px;width:64px">C1027</div><div class="t" style="left:100px;top:227px;width:64px">Sofia Clark</div><div class="t" style="left:167px;top:227px;width:64px">Undergrad</div><div class="t" style="left:234px;top:227px;width:64px">NYU</div><div class="t" style="left:301px;top:227px;width:64px">HackMIT meetup</div><div class="t" style="left:368px;top:227px;width:64px">2025-10-20 20:27</div><div class="t" style="left:435px;top:227px;width:64px">San Francisco</div><div class="t" style="left:502px;top:227px;width:64px">America/Los_Angeles</div><div class="t" style="left:569px;top:227px;width:64px">2025-10-23 20:27</div><div class="t" style="left:636px;top:227px;width:64px">WhatsApp</div><div class="t" style="left:703px;top:227px;width:64px">Recruiting/Internship</div><div class="t" style="left:770px;top:227px;width:64px">B</div><div class="t" style="left:837px;top:227px;width:64px">No</div><div class="t" style="left:904px;top:227px;width:64px">Yes</div><div class="t r" style="left:969px;top:227px;width:64.5px">38</div><div class="t" style="left:1038px;top:227px;width:64px">Yes</div><div class="t" style="left:1105px;top:227px;width:64px">2025-11-06 10:25</div><div class="t r" style="left:1170px;top:227px;width:64.5px">3</div><div class="t" style="left:1239px;top:227px;width:64px">Won</div><div class="t r" style="left:1304px;top:227px;width:64.5px">1</div><div class="t r" style="left:1371px;top:227px;width:64.5px">1</div><div class="t" style="left:1507px;top:227px;width:260px;overflow:visible">Founder building social infra; possible collab.</div><div class="t" style="left:33px;top:241px;width:64px">C1028</div><div class="t" style="left:100px;top:241px;width:64px">William Johansson</div><div class="t" style="left:167px;top:241px;width:64px">Undergrad</div><div class="t" style="left:234px;top:241px;width:64px">UC Berkeley</div><div class="t" style="left:301px;top:241px;width:64px">CalHacks @ Berkeley</div><div class="t" style="left:368px;top:241px;width:64px">2025-10-24 18:33</div><div class="t" style="left:435px;top:241px;width:64px">Los Angeles</div><div class="t" style="left:502px;top:241px;width:64px">America/Los_Angeles</div><div class="t" style="left:569px;top:241px;width:64px">2025-10-25 18:33</div><div class="t" style="left:636px;top:241px;width:64px">SMS</div><div class="t" style="left:703px;top:241px;width:64px">Recruiting/Internship</div><div class="t" style="left:770px;top:241px;width:64px">B</div><div class="t" style="left:837px;top:241px;width:64px">No</div><div class="t" style="left:904px;top:241px;width:64px">No</div><div class="t" style="left:1038px;top:241px;width:64px">No</div><div class="t" style="left:1239px;top:241px;width:64px">New</div><div class="t r" style="left:1304px;top:241px;width:64.5px">4</div><div class="t r" style="left:1371px;top:241px;width:64.5px">5</div><div class="t r" style="left:1438px;top:241px;width:64.5px">2025-10-31</div><div class="t" style="left:1507px;top:241px;width:260px;overflow:visible">USC freshman; great energy, potential campus captain.</div><div class="t" style="left:33px;top:255px;width:64px">C1046</div><div class="t" style="left:100px;top:255px;width:64px">Elijah Ng</div><div class="t" style="left:167px;top:255px;width:64px">Undergrad</div><div class="t" style="left:234px;top:255px;width:64px">Sequoia Scout</div><div class="t" style="left:301px;top:255px;width:64px">HackMIT meetup</div><div class="t" style="left:368px;top:255px;width:64px">2025-10-18 19:44</div><div class="t" style="left:435px;top:255px;width:64px">Los Angeles</div><div class="t" style="left:502px;top:255px;width:64px">America/Los_Angeles</div><div class="t" style="left:569px;top:255px;width:64px">2025-10-25 19:44</div><div class="t" style="left:636px;top:255px;width:64px">Email</div><div class="t" style="left:703px;top:255px;width:64px">Recruiting/Internship</div><div class="t" style="left:770px;top:255px;width:64px">B</div><div class="t" style="left:837px;top:255px;width:64px">Yes</div><div class="t" style="left:904px;top:255px;width:64px">Yes</div><div class="t r" style="left:969px;top:255px;width:64.5px">100</div><div class="t" style="left:1038px;top:255px;width:64px">No</div><div class="t r" style="left:1170px;top:255px;width:64.5px">2</div><div class="t" style="left:1239px;top:255px;width:64px">Warm</div><div class="t r" style="left:1304px;top:255px;width:64.5px">1</div><div class="t r" style="left:1371px;top:255px;width:64.5px">1</div><div class="t r" style="left:1438px;top:255px;width:64.5px">2025-10-30</div><div class="t" style="left:1507px;top:255px;width:260px;overflow:visible">Suggested running CalHacks mini-comp next semester.</div><div class="t" style="left:33px;top:269px;width:64px">C1021</div><div class="t" style="left:100px;top:269px;width:64px">Chloe Costa</div><div class="t" style="left:167px;top:269px;width:64px">Undergrad</div><div class="t" style="left:234px;top:269px;width:64px">YC Alumni</div><div class="t" style="left:301px;top:269px;width:64px">CalHacks @ Berkeley</div><div class="t" style="left:368px;top:269px;width:64px">2025-10-22 12:14</div><div class="t" style="left:435px;top:269px;width:64px">Cambridge</div><div class="t" style="left:502px;top:269px;width:64px">America/New_York</div><div class="t" style="left:569px;top:269px;width:64px">2025-10-26 12:14</div><div class="t" style="left:636px;top:269px;width:64px">Email</div><div class="t" style="left:703px;top:269px;width:64px">Investment</div><div class="t" style="left:770px;top:269px;width:64px">B</div><div class="t" style="left:837px;top:269px;width:64px">Yes</div><div class="t" style="left:904px;top:269px;width:64px">Yes</div><div class="t r" style="left:969px;top:269px;width:64.5px">3</div><div class="t" style="left:1038px;top:269px;width:64px">Yes</div><div class="t" style="left:1105px;top:269px;width:64px">2025-11-01 15:13</div><div class="t r" style="left:1170px;top:269px;width:64.5px">4</div><div class="t" style="left:1239px;top:269px;width:64px">Won</div><div class="t r" style="left:1304px;top:269px;width:64.5px">1</div><div class="t r" style="left:1371px;top:269px;width:64.5px">1</div><div class="t" style="left:1507px;top:269px;width:260px;overflow:visible">YC alum suggested intro to PM at Roblox.</div><div class="t" style="left:33px;top:283px;width:64px">C1047</div><div class="t" style="left:100px;top:283px;width:64px">Noa Chen</div><div class="t" style="left:167px;top:283px;width:64px">Founder</div><div class="t" style="left:234px;top:283px;width:64px">Pear VC</div><div class="t" style="left:301px;top:283px;width:64px">CalHacks @ Berkeley</div><div class="t" style="left:368px;top:283px;width:64px">2025-10-25 12:55</div><div class="t" style="left:435px;top:283px;width:64px">New York</div><div class="t" style="left:502px;top:283px;width:64px">America/New_York</div><div class="t" style="left:569px;top:283px;width:64px">2025-10-26 12:55</div><div class="t" style="left:636px;top:283px;width:64px">Instagram DM</div><div class="t" style="left:703px;top:283px;width:64px">Recruiting/Internship</div><div class="t" style="left:770px;top:283px;width:64px">B</div><div class="t" style="left:837px;top:283px;width:64px">Yes</div><div class="t" style="left:904px;top:283px;width:64px">Yes</div><div class="t r" style="left:969px;top:283px;width:64.5px">189</div><div class="t" style="left:1038px;top:283px;width:64px">Yes</div><div class="t" style="left:1105px;top:283px;width:64px">2025-11-12 9:58</div><div class="t r" style="left:1170px;top:283px;width:64.5px">4</div><div class="t" style="left:1239px;top:283px;width:64px">Warm</div><div class="t r" style="left:1304px;top:283px;width:64.5px">2</div><div class="t r" style="left:1371px;top:283px;width:64.5px">2</div><div class="t r" style="left:1438px;top:283px;width:64.5px">2025-11-06</div><div class="t" style="left:1507px;top:283px;width:260px;overflow:visible">USC freshman; great energy, potential campus captain.</div><div class="t" style="left:33px;top:297px;width:64px">C1031</div><div class="t" style="left:100px;top:297px;width:64px">Harper Harris</div><div class="t" style="left:167px;top:297px;width:64px">Investor/Advisor</div><div class="t" style="left:234px;top:297px;width:64px">Waymo</div><div class="t" style="left:301px;top:297px;width:64px">HackMIT meetup</div><div class="t" style="left:368px;top:297px;width:64px">2025-10-20 14:16</div><div class="t" style="left:435px;top:297px;width:64px">Palo Alto</div><div class="t" style="left:502px;top:297px;width:64px">America/Los_Angeles</div><div class="t" style="left:569px;top:297px;width:64px">2025-10-26 14:16</div><div class="t" style="left:636px;top:297px;width:64px">SMS</div><div class="t" style="left:703px;top:297px;width:64px">Recruiting/Internship</div><div class="t" style="left:770px;top:297px;width:64px">B</div><div class="t" style="left:837px;top:297px;width:64px">Yes</div><div class="t" style="left:904px;top:297px;width:64px">Yes</div><div class="t r" style="left:969px;top:297px;width:64.5px">5</div><div class="t" style="left:1038px;top:297px;width:64px">No</div><div class="t r" style="left:1170px;top:297px;width:64.5px">3</div><div class="t" style="left:1239px;top:297px;width:64px">Warm</div><div class="t r" style="left:1304px;top:297px;width:64.5px">2</div><div class="t r" style="left:1371px;top:297px;width:64.5px">2</div><div class="t r" style="left:1438px;top:297px;width:64.5px">2025-10-29</div><div class="t" style="left:1507px;top:297px;width:260px;overflow:visible">Wants data on campus challenges; asked for deck.</div><div class="t" style="left:33px;top:311px;width:64px">C1029</div><div class="t" style="left:100px;top:311px;width:64px">Daniel Wilson</div><div class="t" style="left:167px;top:311px;width:64px">Founder</div><div class="t" style="left:234px;top:311px;width:64px">a16z</div><div class="t" style="left:301px;top:311px;width:64px">CalHacks @ Berkeley</div><div class="t" style="left:368px;top:311px;width:64px">2025-10-22 14:19</div><div class="t" style="left:435px;top:311px;width:64px">San Francisco</div><div class="t" style="left:502px;top:311px;width:64px">America/Los_Angeles</div><div class="t" style="left:569px;top:311px;width:64px">2025-10-26 14:19</div><div class="t" style="left:636px;top:311px;width:64px">SMS</div><div class="t" style="left:703px;top:311px;width:64px">Collab</div><div class="t" style="left:770px;top:311px;width:64px">B</div><div class="t" style="left:837px;top:311px;width:64px">No</div><div class="t" style="left:904px;top:311px;width:64px">Yes</div><div class="t r" style="left:969px;top:311px;width:64.5px">66</div><div class="t" style="left:1038px;top:311px;width:64px">No</div><div class="t r" style="left:1170px;top:311px;width:64.5px">2</div><div class="t" style="left:1239px;top:311px;width:64px">Warm</div><div class="t r" style="left:1304px;top:311px;width:64.5px">2</div><div class="t r" style="left:1371px;top:311px;width:64.5px">2</div><div class="t r" style="left:1438px;top:311px;width:64.5px">2025-11-07</div><div class="t" style="left:1507px;top:311px;width:260px;overflow:visible">Suggested running CalHacks mini-comp next semester.</div><div class="t" style="left:33px;top:325px;width:64px">C1032</div><div class="t" style="left:100px;top:325px;width:64px">Kai King</div><div class="t" style="left:167px;top:325px;width:64px">Mentor</div><div class="t" style="left:234px;top:325px;width:64px">NYU</div><div class="t" style="left:301px;top:325px;width:64px">CalHacks @ Berkeley</div><div class="t" style="left:368px;top:325px;width:64px">2025-10-21 14:44</div><div class="t" style="left:435px;top:325px;width:64px">San Francisco</div><div class="t" style="left:502px;top:325px;width:64px">America/Los_Angeles</div><div class="t" style="left:569px;top:325px;width:64px">2025-10-27 14:44</div><div class="t" style="left:636px;top:325px;width:64px">WhatsApp</div><div class="t" style="left:703px;top:325px;width:64px">Collab</div><div class="t" style="left:770px;top:325px;width:64px">B</div><div class="t" style="left:837px;top:325px;width:64px">No</div><div class="t" style="left:904px;top:325px;width:64px">Yes</div><div class="t r" style="left:969px;top:325px;width:64.5px">29</div><div class="t" style="left:1038px;top:325px;width:64px">Yes</div><div class="t" style="left:1105px;top:325px;width:64px">2025-11-06 19:44</div><div class="t r" style="left:1170px;top:325px;width:64.5px">3</div><div class="t" style="left:1239px;top:325px;width:64px">Warm</div><div class="t r" style="left:1304px;top:325px;width:64.5px">2</div><div class="t r" style="left:1371px;top:325px;width:64.5px">2</div><div class="t r" style="left:1438px;top:325px;width:64.5px">2025-11-10</div><div class="t" style="left:1507px;top:325px;width:260px;overflow:visible">Pear VC: wants traction metrics before intro.</div><div class="t" style="left:33px;top:339px;width:64px">C1059</div><div class="t" style="left:100px;top:339px;width:64px">Elijah Young</div><div class="t" style="left:167px;top:339px;width:64px">Founder</div><div class="t" style="left:234px;top:339px;width:64px">Cal Poly</div><div class="t" style="left:301px;top:339px;width:64px">CalHacks @ Berkeley</div><div class="t" style="left:368px;top:339px;width:64px">2025-10-25 20:55</div><div class="t" style="left:435px;top:339px;width:64px">Palo Alto</div><div class="t" style="left:502px;top:339px;width:64px">America/Los_Angeles</div><div class="t" style="left:569px;top:339px;width:64px">2025-10-27 20:55</div><div class="t" style="left:636px;top:339px;width:64px">LinkedIn</div><div class="t" style="left:703px;top:339px;width:64px">Collab</div><div class="t" style="left:770px;top:339px;width:64px">B</div><div class="t" style="left:837px;top:339px;width:64px">No</div><div class="t" style="left:904px;top:339px;width:64px">Yes</div><div class="t r" style="left:969px;top:339px;width:64.5px">19</div><div class="t" style="left:1038px;top:339px;width:64px">No</div><div class="t r" style="left:1170px;top:339px;width:64.5px">3</div><div class="t" style="left:1239px;top:339px;width:64px">Lost</div><div class="t r" style="left:1304px;top:339px;width:64.5px">2</div><div class="t r" style="left:1371px;top:339px;width:64.5px">2</div><div class="t" style="left:1507px;top:339px;width:260px;overflow:visible">Agreed to test Comp beta at their club event.</div><div class="t" style="left:33px;top:353px;width:64px">C1038</div><div class="t" style="left:100px;top:353px;width:64px">Diego Young</div><div class="t" style="left:167px;top:353px;width:64px">Investor/Advisor</div><div class="t" style="left:234px;top:353px;width:64px">Figma</div><div class="t" style="left:301px;top:353px;width:64px">YC Afterparty (SF)</div><div class="t" style="left:368px;top:353px;width:64px">2025-10-26 10:55</div><div class="t" style="left:435px;top:353px;width:64px">Berkeley</div><div class="t" style="left:502px;top:353px;width:64px">America/Los_Angeles</div><div class="t" style="left:569px;top:353px;width:64px">2025-10-28 10:55</div><div class="t" style="left:636px;top:353px;width:64px">SMS</div><div class="t" style="left:703px;top:353px;width:64px">Collab</div><div class="t" style="left:770px;top:353px;width:64px">C</div><div class="t" style="left:837px;top:353px;width:64px">No</div><div class="t" style="left:904px;top:353px;width:64px">No</div><div class="t" style="left:1038px;top:353px;width:64px">No</div><div class="t" style="left:1239px;top:353px;width:64px">New</div><div class="t r" style="left:1304px;top:353px;width:64.5px">4</div><div class="t r" style="left:1371px;top:353px;width:64.5px">5</div><div class="t r" style="left:1438px;top:353px;width:64.5px">2025-11-04</div><div class="t" style="left:1507px;top:353px;width:260px;overflow:visible">Met at hallway demo; loved Comp's proof concept.</div><div class="t" style="left:33px;top:367px;width:64px">C1050</div><div class="t" style="left:100px;top:367px;width:64px">William Lim</div><div class="t" style="left:167px;top:367px;width:64px">Undergrad</div><div class="t" style="left:234px;top:367px;width:64px">Figma</div><div class="t" style="left:301px;top:367px;width:64px">CalHacks @ Berkeley</div><div class="t" style="left:368px;top:367px;width:64px">2025-10-22 11:17</div><div class="t" style="left:435px;top:367px;width:64px">Boston</div><div class="t" style="left:502px;top:367px;width:64px">America/New_York</div><div class="t" style="left:569px;top:367px;width:64px">2025-10-28 11:17</div><div class="t" style="left:636px;top:367px;width:64px">Email</div><div class="t" style="left:703px;top:367px;width:64px">Collab</div><div class="t" style="left:770px;top:367px;width:64px">C</div><div class="t" style="left:837px;top:367px;width:64px">No</div><div class="t" style="left:904px;top:367px;width:64px">Yes</div><div class="t r" style="left:969px;top:367px;width:64.5px">112</div><div class="t" style="left:1038px;top:367px;width:64px">No</div><div class="t r" style="left:1170px;top:367px;width:64.5px">2</div><div class="t" style="left:1239px;top:367px;width:64px">Warm</div><div class="t r" style="left:1304px;top:367px;width:64.5px">0</div><div class="t r" style="left:1371px;top:367px;width:64.5px">0</div><div class="t r" style="left:1438px;top:367px;width:64.5px">2025-11-06</div><div class="t" style="left:1507px;top:367px;width:260px;overflow:visible">Pear VC: wants traction metrics before intro.</div><div class="t" style="left:33px;top:381px;width:64px">C1034</div><div class="t" style="left:100px;top:381px;width:64px">Olivia Nguyen</div><div class="t" style="left:167px;top:381px;width:64px">Investor/Advisor</div><div class="t" style="left:234px;top:381px;width:64px">Columbia</div><div class="t" style="left:301px;top:381px;width:64px">YC Afterparty (SF)</div><div class="t" style="left:368px;top:381px;width:64px">2025-10-26 14:13</div><div class="t" style="left:435px;top:381px;width:64px">Palo Alto</div><div class="t" style="left:502px;top:381px;width:64px">America/Los_Angeles</div><div class="t" style="left:569px;top:381px;width:64px">2025-10-28 14:13</div><div class="t" style="left:636px;top:381px;width:64px">SMS</div><div class="t" style="left:703px;top:381px;width:64px">Mentorship</div><div class="t" style="left:770px;top:381px;width:64px">C</div><div class="t" style="left:837px;top:381px;width:64px">No</div><div class="t" style="left:904px;top:381px;width:64px">Yes</div><div class="t r" style="left:969px;top:381px;width:64.5px">99</div><div class="t" style="left:1038px;top:381px;width:64px">Yes</div><div class="t" style="left:1105px;top:381px;width:64px">2025-11-11 17:13</div><div class="t r" style="left:1170px;top:381px;width:64.5px">5</div><div class="t" style="left:1239px;top:381px;width:64px">Warm</div><div class="t r" style="left:1304px;top:381px;width:64.5px">1</div><div class="t r" style="left:1371px;top:381px;width:64.5px">1</div><div class="t r" style="left:1438px;top:381px;width:64.5px">2025-11-09</div><div class="t" style="left:1507px;top:381px;width:260px;overflow:visible">GV design lead open to portfolio review.</div><div class="t" style="left:33px;top:395px;width:64px">C1022</div><div class="t" style="left:100px;top:395px;width:64px">Rhea Brown</div><div class="t" style="left:167px;top:395px;width:64px">Undergrad</div><div class="t" style="left:234px;top:395px;width:64px">Pear VC</div><div class="t" style="left:301px;top:395px;width:64px">NEXTGEN Summit</div><div class="t" style="left:368px;top:395px;width:64px">2025-10-29 9:41</div><div class="t" style="left:435px;top:395px;width:64px">New York</div><div class="t" style="left:502px;top:395px;width:64px">America/New_York</div><div class="t" style="left:569px;top:395px;width:64px">2025-10-30 9:41</div><div class="t" style="left:636px;top:395px;width:64px">SMS</div><div class="t" style="left:703px;top:395px;width:64px">Customer Discovery</div><div class="t" style="left:770px;top:395px;width:64px">A</div><div class="t" style="left:837px;top:395px;width:64px">No</div><div class="t" style="left:904px;top:395px;width:64px">Yes</div><div class="t r" style="left:969px;top:395px;width:64.5px">72</div><div class="t" style="left:1038px;top:395px;width:64px">No</div><div class="t r" style="left:1170px;top:395px;width:64.5px">3</div><div class="t" style="left:1239px;top:395px;width:64px">Warm</div><div class="t r" style="left:1304px;top:395px;width:64.5px">1</div><div class="t r" style="left:1371px;top:395px;width:64.5px">1</div><div class="t r" style="left:1438px;top:395px;width:64.5px">2025-11-04</div><div class="t" style="left:1507px;top:395px;width:260px;overflow:visible">Pear VC: wants traction metrics before intro.</div><div class="t" style="left:33px;top:409px;width:64px">C1014</div><div class="t" style="left:100px;top:409px;width:64px">Ari Thomas</div><div class="t" style="left:167px;top:409px;width:64px">Undergrad</div><div class="t" style="left:234px;top:409px;width:64px">Figma</div><div class="t" style="left:301px;top:409px;width:64px">NEXTGEN Summit</div><div class="t" style="left:368px;top:409px;width:64px">2025-10-29 18:25</div><div class="t" style="left:435px;top:409px;width:64px">New York</div><div class="t" style="left:502px;top:409px;width:64px">America/New_York</div><div class="t" style="left:569px;top:409px;width:64px">2025-10-30 18:25</div><div class="t" style="left:636px;top:409px;width:64px">LinkedIn</div><div class="t" style="left:703px;top:409px;width:64px">Recruiting/Internship</div><div class="t" style="left:770px;top:409px;width:64px">B</div><div class="t" style="left:837px;top:409px;width:64px">No</div><div class="t" style="left:904px;top:409px;width:64px">Yes</div><div class="t r" style="left:969px;top:409px;width:64.5px">2</div><div class="t" style="left:1038px;top:409px;width:64px">No</div><div class="t r" style="left:1170px;top:409px;width:64.5px">2</div><div class="t" style="left:1239px;top:409px;width:64px">Lost</div><div class="t r" style="left:1304px;top:409px;width:64.5px">2</div><div class="t r" style="left:1371px;top:409px;width:64.5px">2</div><div class="t" style="left:1507px;top:409px;width:260px;overflow:visible">YC alum suggested intro to PM at Roblox.</div><div class="t" style="left:33px;top:423px;width:64px">C1053</div><div class="t" style="left:100px;top:423px;width:64px">Harper King</div><div class="t" style="left:167px;top:423px;width:64px">Undergrad</div><div class="t" style="left:234px;top:423px;width:64px">Ramp</div><div class="t" style="left:301px;top:423px;width:64px">CalHacks @ Berkeley</div><div class="t" style="left:368px;top:423px;width:64px">2025-10-24 14:44</div><div class="t" style="left:435px;top:423px;width:64px">Palo Alto</div><div class="t" style="left:502px;top:423px;width:64px">America/Los_Angeles</div><div class="t" style="left:569px;top:423px;width:64px">2025-10-31 14:44</div><div class="t" style="left:636px;top:423px;width:64px">WhatsApp</div><div class="t" style="left:703px;top:423px;width:64px">Collab</div><div class="t" style="left:770px;top:423px;width:64px">A</div><div class="t" style="left:837px;top:423px;width:64px">No</div><div class="t" style="left:904px;top:423px;width:64px">Yes</div><div class="t r" style="left:969px;top:423px;width:64.5px">38</div><div class="t" style="left:1038px;top:423px;width:64px">No</div><div class="t r" style="left:1170px;top:423px;width:64.5px">2</div><div class="t" style="left:1239px;top:423px;width:64px">Warm</div><div class="t r" style="left:1304px;top:423px;width:64.5px">3</div><div class="t r" style="left:1371px;top:423px;width:64.5px">3</div><div class="t r" style="left:1438px;top:423px;width:64.5px">2025-11-05</div><div class="t" style="left:1507px;top:423px;width:260px;overflow:visible">MIT CS junior; can advise on matching algorithm.</div><div class="t" style="left:33px;top:437px;width:64px">C1036</div><div class="t" style="left:100px;top:437px;width:64px">Nora Weiss</div><div class="t" style="left:167px;top:437px;width:64px">Undergrad</div><div class="t" style="left:234px;top:437px;width:64px">Stanford</div><div class="t" style="left:301px;top:437px;width:64px">founders.inc salon</div><div class="t" style="left:368px;top:437px;width:64px">2025-10-29 22:33</div><div class="t" style="left:435px;top:437px;width:64px">San Francisco</div><div class="t" style="left:502px;top:437px;width:64px">America/Los_Angeles</div><div class="t" style="left:569px;top:437px;width:64px">2025-10-31 22:33</div><div class="t" style="left:636px;top:437px;width:64px">Email</div><div class="t" style="left:703px;top:437px;width:64px">Collab</div><div class="t" style="left:770px;top:437px;width:64px">C</div><div class="t" style="left:837px;top:437px;width:64px">No</div><div class="t" style="left:904px;top:437px;width:64px">Yes</div><div class="t r" style="left:969px;top:437px;width:64.5px">65</div><div class="t" style="left:1038px;top:437px;width:64px">No</div><div class="t r" style="left:1170px;top:437px;width:64.5px">3</div><div class="t" style="left:1239px;top:437px;width:64px">Lost</div><div class="t r" style="left:1304px;top:437px;width:64.5px">2</div><div class="t r" style="left:1371px;top:437px;width:64.5px">2</div><div class="t" style="left:1507px;top:437px;width:260px;overflow:visible">Designer at Notion, offered UI critique session.</div><div class="t" style="left:33px;top:451px;width:64px">C1052</div><div class="t" style="left:100px;top:451px;width:64px">Arjun Kim</div><div class="t" style="left:167px;top:451px;width:64px">Founder</div><div class="t" style="left:234px;top:451px;width:64px">a16z</div><div class="t" style="left:301px;top:451px;width:64px">YC Afterparty (SF)</div><div class="t" style="left:368px;top:451px;width:64px">2025-10-27 22:55</div><div class="t" style="left:435px;top:451px;width:64px">New York</div><div class="t" style="left:502px;top:451px;width:64px">America/New_York</div><div class="t" style="left:569px;top:451px;width:64px">2025-10-31 22:55</div><div class="t" style="left:636px;top:451px;width:64px">SMS</div><div class="t" style="left:703px;top:451px;width:64px">Mentorship</div><div class="t" style="left:770px;top:451px;width:64px">C</div><div class="t" style="left:837px;top:451px;width:64px">No</div><div class="t" style="left:904px;top:451px;width:64px">Yes</div><div class="t r" style="left:969px;top:451px;width:64.5px">9</div><div class="t" style="left:1038px;top:451px;width:64px">No</div><div class="t r" style="left:1170px;top:451px;width:64.5px">3</div><div class="t" style="left:1239px;top:451px;width:64px">Warm</div><div class="t r" style="left:1304px;top:451px;width:64.5px">1</div><div class="t r" style="left:1371px;top:451px;width:64.5px">1</div><div class="t r" style="left:1438px;top:451px;width:64.5px">2025-11-10</div><div class="t" style="left:1507px;top:451px;width:260px;overflow:visible">YC alum suggested intro to PM at Roblox.</div><div class="t" style="left:33px;top:465px;width:64px">C1012</div><div class="t" style="left:100px;top:465px;width:64px">Sloan Martinez</div><div class="t" style="left:167px;top:465px;width:64px">Investor/Advisor</div><div class="t" style="left:234px;top:465px;width:64px">Figma</div><div class="t" style="left:301px;top:465px;width:64px">YC Afterparty (SF)</div><div class="t" style="left:368px;top:465px;width:64px">2025-10-28 14:05</div><div class="t" style="left:435px;top:465px;width:64px">Berkeley</div><div class="t" style="left:502px;top:465px;width:64px">America/Los_Angeles</div><div class="t" style="left:569px;top:465px;width:64px">2025-11-01 14:05</div><div class="t" style="left:636px;top:465px;width:64px">Instagram DM</div><div class="t" style="left:703px;top:465px;width:64px">Mentorship</div><div class="t" style="left:770px;top:465px;width:64px">B</div><div class="t" style="left:837px;top:465px;width:64px">No</div><div class="t" style="left:904px;top:465px;width:64px">Yes</div><div class="t r" style="left:969px;top:465px;width:64.5px">23</div><div class="t" style="left:1038px;top:465px;width:64px">Yes</div><div class="t" style="left:1105px;top:465px;width:64px">2025-11-15 13:05</div><div class="t r" style="left:1170px;top:465px;width:64.5px">4</div><div class="t" style="left:1239px;top:465px;width:64px">Won</div><div class="t r" style="left:1304px;top:465px;width:64.5px">2</div><div class="t r" style="left:1371px;top:465px;width:64.5px">2</div><div class="t" style="left:1507px;top:465px;width:260px;overflow:visible">Designer at Notion, offered UI critique session.</div><div class="t" style="left:33px;top:479px;width:64px">C1023</div><div class="t" style="left:100px;top:479px;width:64px">Ananya Torres</div><div class="t" style="left:167px;top:479px;width:64px">Mentor</div><div class="t" style="left:234px;top:479px;width:64px">Cal Poly</div><div class="t" style="left:301px;top:479px;width:64px">founders.inc salon</div><div class="t" style="left:368px;top:479px;width:64px">2025-10-29 11:25</div><div class="t" style="left:435px;top:479px;width:64px">Los Angeles</div><div class="t" style="left:502px;top:479px;width:64px">America/Los_Angeles</div><div class="t" style="left:569px;top:479px;width:64px">2025-11-02 11:25</div><div class="t" style="left:636px;top:479px;width:64px">Email</div><div class="t" style="left:703px;top:479px;width:64px">Investment</div><div class="t" style="left:770px;top:479px;width:64px">C</div><div class="t" style="left:837px;top:479px;width:64px">No</div><div class="t" style="left:904px;top:479px;width:64px">Yes</div><div class="t r" style="left:969px;top:479px;width:64.5px">140</div><div class="t" style="left:1038px;top:479px;width:64px">No</div><div class="t r" style="left:1170px;top:479px;width:64.5px">1</div><div class="t" style="left:1239px;top:479px;width:64px">Warm</div><div class="t r" style="left:1304px;top:479px;width:64.5px">3</div><div class="t r" style="left:1371px;top:479px;width:64.5px">3</div><div class="t r" style="left:1438px;top:479px;width:64.5px">2025-11-09</div><div class="t" style="left:1507px;top:479px;width:260px;overflow:visible">Pear VC: wants traction metrics before intro.</div><div class="t" style="left:33px;top:493px;width:64px">C1033</div><div class="t" style="left:100px;top:493px;width:64px">Luca Kim</div><div class="t" style="left:167px;top:493px;width:64px">Investor/Advisor</div><div class="t" style="left:234px;top:493px;width:64px">Stanford</div><div class="t" style="left:301px;top:493px;width:64px">CalHacks @ Berkeley</div><div class="t" style="left:368px;top:493px;width:64px">2025-10-26 11:33</div><div class="t" style="left:435px;top:493px;width:64px">Los Angeles</div><div class="t" style="left:502px;top:493px;width:64px">America/Los_Angeles</div><div class="t" style="left:569px;top:493px;width:64px">2025-11-02 11:33</div><div class="t" style="left:636px;top:493px;width:64px">Instagram DM</div><div class="t" style="left:703px;top:493px;width:64px">Mentorship</div><div class="t" style="left:770px;top:493px;width:64px">B</div><div class="t" style="left:837px;top:493px;width:64px">No</div><div class="t" style="left:904px;top:493px;width:64px">Yes</div><div class="t r" style="left:969px;top:493px;width:64.5px">36</div><div class="t" style="left:1038px;top:493px;width:64px">No</div><div class="t r" style="left:1170px;top:493px;width:64.5px">2</div><div class="t" style="left:1239px;top:493px;width:64px">Lost</div><div class="t r" style="left:1304px;top:493px;width:64.5px">1</div><div class="t r" style="left:1371px;top:493px;width:64.5px">1</div><div class="t" style="left:1507px;top:493px;width:260px;overflow:visible">Pear VC: wants traction metrics before intro.</div><div class="t" style="left:33px;top:507px;width:64px">C1051</div><div class="t" style="left:100px;top:507px;width:64px">Charlotte Fischer</div><div class="t" style="left:167px;top:507px;width:64px">Founder</div><div class="t" style="left:234px;top:507px;width:64px">Pear VC</div><div class="t" style="left:301px;top:507px;width:64px">founders.inc salon</div><div class="t" style="left:368px;top:507px;width:64px">2025-10-29 12:55</div><div class="t" style="left:435px;top:507px;width:64px">Boston</div><div class="t" style="left:502px;top:507px;width:64px">America/New_York</div><div class="t" style="left:569px;top:507px;width:64px">2025-11-02 12:55</div><div class="t" style="left:636px;top:507px;width:64px">Email</div><div class="t" style="left:703px;top:507px;width:64px">Collab</div><div class="t" style="left:770px;top:507px;width:64px">B</div><div class="t" style="left:837px;top:507px;width:64px">No</div><div class="t" style="left:904px;top:507px;width:64px">Yes</div><div class="t r" style="left:969px;top:507px;width:64.5px">10</div><div class="t" style="left:1038px;top:507px;width:64px">No</div><div class="t r" style="left:1170px;top:507px;width:64.5px">3</div><div class="t" style="left:1239px;top:507px;width:64px">Warm</div><div class="t r" style="left:1304px;top:507px;width:64.5px">0</div><div class="t r" style="left:1371px;top:507px;width:64.5px">0</div><div class="t r" style="left:1438px;top:507px;width:64.5px">2025-11-14</div><div class="t" style="left:1507px;top:507px;width:260px;overflow:visible">Pear VC: wants traction metrics before intro.</div><div class="t" style="left:33px;top:521px;width:64px">C1020</div><div class="t" style="left:100px;top:521px;width:64px">Sophia Murphy</div><div class="t" style="left:167px;top:521px;width:64px">Investor/Advisor</div><div class="t" style="left:234px;top:521px;width:64px">GV Design</div><div class="t" style="left:301px;top:521px;width:64px">YC Afterparty (SF)</div><div class="t" style="left:368px;top:521px;width:64px">2025-10-27 15:25</div><div class="t" style="left:435px;top:521px;width:64px">New York</div><div class="t" style="left:502px;top:521px;width:64px">America/New_York</div><div class="t" style="left:569px;top:521px;width:64px">2025-11-02 15:25</div><div class="t" style="left:636px;top:521px;width:64px">WhatsApp</div><div class="t" style="left:703px;top:521px;width:64px">Investment</div><div class="t" style="left:770px;top:521px;width:64px">B</div><div class="t" style="left:837px;top:521px;width:64px">Yes</div><div class="t" style="left:904px;top:521px;width:64px">Yes</div><div class="t r" style="left:969px;top:521px;width:64.5px">1</div><div class="t" style="left:1038px;top:521px;width:64px">No</div><div class="t r" style="left:1170px;top:521px;width:64.5px">3</div><div class="t" style="left:1239px;top:521px;width:64px">Lost</div><div class="t r" style="left:1304px;top:521px;width:64.5px">0</div><div class="t r" style="left:1371px;top:521px;width:64.5px">0</div><div class="t" style="left:1507px;top:521px;width:260px;overflow:visible">Met at hallway demo; loved Comp's proof concept.</div><div class="t" style="left:33px;top:535px;width:64px">C1025</div><div class="t" style="left:100px;top:535px;width:64px">William Garcia</div><div class="t" style="left:167px;top:535px;width:64px">Investor/Advisor</div><div class="t" style="left:234px;top:535px;width:64px">MIT</div><div class="t" style="left:301px;top:535px;width:64px">NEXTGEN Summit</div><div class="t" style="left:368px;top:535px;width:64px">2025-11-01 17:55</div><div class="t" style="left:435px;top:535px;width:64px">New York</div><div class="t" style="left:502px;top:535px;width:64px">America/New_York</div><div class="t" style="left:569px;top:535px;width:64px">2025-11-02 17:55</div><div class="t" style="left:636px;top:535px;width:64px">WhatsApp</div><div class="t" style="left:703px;top:535px;width:64px">Collab</div><div class="t" style="left:770px;top:535px;width:64px">A</div><div class="t" style="left:837px;top:535px;width:64px">No</div><div class="t" style="left:904px;top:535px;width:64px">Yes</div><div class="t r" style="left:969px;top:535px;width:64.5px">45</div><div class="t" style="left:1038px;top:535px;width:64px">Yes</div><div class="t" style="left:1105px;top:535px;width:64px">2025-11-08 14:55</div><div class="t r" style="left:1170px;top:535px;width:64.5px">4</div><div class="t" style="left:1239px;top:535px;width:64px">Meeting Set</div><div class="t r" style="left:1304px;top:535px;width:64.5px">0</div><div class="t r" style="left:1371px;top:535px;width:64.5px">0</div><div class="t r" style="left:1438px;top:535px;width:64.5px">2025-11-14</div><div class="t" style="left:1507px;top:535px;width:260px;overflow:visible">Wants data on campus challenges; asked for deck.</div><div class="t" style="left:33px;top:549px;width:64px">C1039</div><div class="t" style="left:100px;top:549px;width:64px">Sophia Rodriguez</div><div class="t" style="left:167px;top:549px;width:64px">Founder</div><div class="t" style="left:234px;top:549px;width:64px">GV Design</div><div class="t" style="left:301px;top:549px;width:64px">YC Afterparty (SF)</div><div class="t" style="left:368px;top:549px;width:64px">2025-10-28 21:25</div><div class="t" style="left:435px;top:549px;width:64px">Boston</div><div class="t" style="left:502px;top:549px;width:64px">America/New_York</div><div class="t" style="left:569px;top:549px;width:64px">2025-11-02 21:25</div><div class="t" style="left:636px;top:549px;width:64px">Email</div><div class="t" style="left:703px;top:549px;width:64px">Customer Discovery</div><div class="t" style="left:770px;top:549px;width:64px">C</div><div class="t" style="left:837px;top:549px;width:64px">No</div><div class="t" style="left:904px;top:549px;width:64px">Yes</div><div class="t r" style="left:969px;top:549px;width:64.5px">9</div><div class="t" style="left:1038px;top:549px;width:64px">Yes</div><div class="t" style="left:1105px;top:549px;width:64px">2025-11-14 6:20</div><div class="t r" style="left:1170px;top:549px;width:64.5px">2</div><div class="t" style="left:1239px;top:549px;width:64px">Meeting Set</div><div class="t r" style="left:1304px;top:549px;width:64.5px">0</div><div class="t r" style="left:1371px;top:549px;width:64.5px">0</div><div class="t r" style="left:1438px;top:549px;width:64.5px">2025-11-09</div><div class="t" style="left:1507px;top:549px;width:260px;overflow:visible">Met at hallway demo; loved Comp's proof concept.</div><div class="t" style="left:33px;top:563px;width:64px">C1001</div><div class="t" style="left:100px;top:563px;width:64px">Kenji Fischer</div><div class="t" style="left:167px;top:563px;width:64px">Undergrad</div><div class="t" style="left:234px;top:563px;width:64px">UC Berkeley</div><div class="t" style="left:301px;top:563px;width:64px">NEXTGEN Summit</div><div class="t" style="left:368px;top:563px;width:64px">2025-11-01 9:01</div><div class="t" style="left:435px;top:563px;width:64px">New York</div><div class="t" style="left:502px;top:563px;width:64px">America/New_York</div><div class="t" style="left:569px;top:563px;width:64px">2025-11-03 9:01</div><div class="t" style="left:636px;top:563px;width:64px">WhatsApp</div><div class="t" style="left:703px;top:563px;width:64px">Investment</div><div class="t" style="left:770px;top:563px;width:64px">A</div><div class="t" style="left:837px;top:563px;width:64px">No</div><div class="t" style="left:904px;top:563px;width:64px">Yes</div><div class="t r" style="left:969px;top:563px;width:64.5px">132</div><div class="t" style="left:1038px;top:563px;width:64px">Yes</div><div class="t" style="left:1105px;top:563px;width:64px">2025-11-10 21:05</div><div class="t r" style="left:1170px;top:563px;width:64.5px">3</div><div class="t" style="left:1239px;top:563px;width:64px">Meeting Set</div><div class="t r" style="left:1304px;top:563px;width:64.5px">2</div><div class="t r" style="left:1371px;top:563px;width:64.5px">2</div><div class="t r" style="left:1438px;top:563px;width:64.5px">2025-11-09</div><div class="t" style="left:1507px;top:563px;width:260px;overflow:visible">GV design lead open to portfolio review.</div><div class="t" style="left:33px;top:577px;width:64px">C1055</div><div class="t" style="left:100px;top:577px;width:64px">Elijah Clark</div><div class="t" style="left:167px;top:577px;width:64px">Founder</div><div class="t" style="left:234px;top:577px;width:64px">Cal Poly</div><div class="t" style="left:301px;top:577px;width:64px">founders.inc salon</div><div class="t" style="left:368px;top:577px;width:64px">2025-10-31 14:44</div><div class="t" style="left:435px;top:577px;width:64px">Boston</div><div class="t" style="left:502px;top:577px;width:64px">America/New_York</div><div class="t" style="left:569px;top:577px;width:64px">2025-11-03 14:44</div><div class="t" style="left:636px;top:577px;width:64px">Instagram DM</div><div class="t" style="left:703px;top:577px;width:64px">Investment</div><div class="t" style="left:770px;top:577px;width:64px">B</div><div class="t" style="left:837px;top:577px;width:64px">No</div><div class="t" style="left:904px;top:577px;width:64px">Yes</div><div class="t r" style="left:969px;top:577px;width:64.5px">7</div><div class="t" style="left:1038px;top:577px;width:64px">Yes</div><div class="t" style="left:1105px;top:577px;width:64px">2025-11-06 21:44</div><div class="t r" style="left:1170px;top:577px;width:64.5px">4</div><div class="t" style="left:1239px;top:577px;width:64px">Meeting Set</div><div class="t r" style="left:1304px;top:577px;width:64.5px">1</div><div class="t r" style="left:1371px;top:577px;width:64.5px">1</div><div class="t r" style="left:1438px;top:577px;width:64.5px">2025-11-06</div><div class="t" style="left:1507px;top:577px;width:260px;overflow:visible">GV design lead open to portfolio review.</div><div class="t" style="left:33px;top:591px;width:64px">C1011</div><div class="t" style="left:100px;top:591px;width:64px">Lucas Ito</div><div class="t" style="left:167px;top:591px;width:64px">Undergrad</div><div class="t" style="left:234px;top:591px;width:64px">GV Design</div><div class="t" style="left:301px;top:591px;width:64px">NEXTGEN Summit</div><div class="t" style="left:368px;top:591px;width:64px">2025-10-29 15:25</div><div class="t" style="left:435px;top:591px;width:64px">New York</div><div class="t" style="left:502px;top:591px;width:64px">America/New_York</div><div class="t" style="left:569px;top:591px;width:64px">2025-11-03 15:25</div><div class="t" style="left:636px;top:591px;width:64px">WhatsApp</div><div class="t" style="left:703px;top:591px;width:64px">Recruiting/Internship</div><div class="t" style="left:770px;top:591px;width:64px">B</div><div class="t" style="left:837px;top:591px;width:64px">Yes</div><div class="t" style="left:904px;top:591px;width:64px">Yes</div><div class="t r" style="left:969px;top:591px;width:64.5px">29</div><div class="t" style="left:1038px;top:591px;width:64px">No</div><div class="t r" style="left:1170px;top:591px;width:64.5px">3</div><div class="t" style="left:1239px;top:591px;width:64px">Lost</div><div class="t r" style="left:1304px;top:591px;width:64.5px">0</div><div class="t r" style="left:1371px;top:591px;width:64.5px">0</div><div class="t" style="left:1507px;top:591px;width:260px;overflow:visible">Investor wants 10 pilot schools before check.</div><div class="t" style="left:33px;top:605px;width:64px">C1026</div><div class="t" style="left:100px;top:605px;width:64px">Felix Choi</div><div class="t" style="left:167px;top:605px;width:64px">Undergrad</div><div class="t" style="left:234px;top:605px;width:64px">Northeastern</div><div class="t" style="left:301px;top:605px;width:64px">founders.inc salon</div><div class="t" style="left:368px;top:605px;width:64px">2025-10-29 18:13</div><div class="t" style="left:435px;top:605px;width:64px">Cambridge</div><div class="t" style="left:502px;top:605px;width:64px">America/New_York</div><div class="t" style="left:569px;top:605px;width:64px">2025-11-03 18:13</div><div class="t" style="left:636px;top:605px;width:64px">WhatsApp</div><div class="t" style="left:703px;top:605px;width:64px">Investment</div><div class="t" style="left:770px;top:605px;width:64px">A</div><div class="t" style="left:837px;top:605px;width:64px">No</div><div class="t" style="left:904px;top:605px;width:64px">Yes</div><div class="t r" style="left:969px;top:605px;width:64.5px">1</div><div class="t" style="left:1038px;top:605px;width:64px">Yes</div><div class="t" style="left:1105px;top:605px;width:64px">2025-11-11 19:13</div><div class="t r" style="left:1170px;top:605px;width:64.5px">3</div><div class="t" style="left:1239px;top:605px;width:64px">Meeting Set</div><div class="t r" style="left:1304px;top:605px;width:64.5px">2</div><div class="t r" style="left:1371px;top:605px;width:64.5px">2</div><div class="t r" style="left:1438px;top:605px;width:64.5px">2025-11-15</div><div class="t" style="left:1507px;top:605px;width:260px;overflow:visible">MIT CS junior; can advise on matching algorithm.</div><div class="t" style="left:33px;top:619px;width:64px">C1010</div><div class="t" style="left:100px;top:619px;width:64px">Leo King</div><div class="t" style="left:167px;top:619px;width:64px">Investor/Advisor</div><div class="t" style="left:234px;top:619px;width:64px">Roblox</div><div class="t" style="left:301px;top:619px;width:64px">founders.inc salon</div><div class="t" style="left:368px;top:619px;width:64px">2025-10-31 12:05</div><div class="t" style="left:435px;top:619px;width:64px">Cambridge</div><div class="t" style="left:502px;top:619px;width:64px">America/New_York</div><div class="t" style="left:569px;top:619px;width:64px">2025-11-04 12:05</div><div class="t" style="left:636px;top:619px;width:64px">SMS</div><div class="t" style="left:703px;top:619px;width:64px">Collab</div><div class="t" style="left:770px;top:619px;width:64px">C</div><div class="t" style="left:837px;top:619px;width:64px">No</div><div class="t" style="left:904px;top:619px;width:64px">Yes</div><div class="t r" style="left:969px;top:619px;width:64.5px">2</div><div class="t" style="left:1038px;top:619px;width:64px">No</div><div class="t r" style="left:1170px;top:619px;width:64.5px">2</div><div class="t" style="left:1239px;top:619px;width:64px">Warm</div><div class="t r" style="left:1304px;top:619px;width:64.5px">0</div><div class="t r" style="left:1371px;top:619px;width:64.5px">0</div><div class="t r" style="left:1438px;top:619px;width:64.5px">2025-11-09</div><div class="t" style="left:1507px;top:619px;width:260px;overflow:visible">Investor wants 10 pilot schools before check.</div><div class="t" style="left:33px;top:633px;width:64px">C1004</div><div class="t" style="left:100px;top:633px;width:64px">Zoe Fischer</div><div class="t" style="left:167px;top:633px;width:64px">Undergrad</div><div class="t" style="left:234px;top:633px;width:64px">Stanford</div><div class="t" style="left:301px;top:633px;width:64px">founders.inc salon</div><div class="t" style="left:368px;top:633px;width:64px">2025-10-29 17:13</div><div class="t" style="left:435px;top:633px;width:64px">New York</div><div class="t" style="left:502px;top:633px;width:64px">America/New_York</div><div class="t" style="left:569px;top:633px;width:64px">2025-11-04 17:13</div><div class="t" style="left:636px;top:633px;width:64px">LinkedIn</div><div class="t" style="left:703px;top:633px;width:64px">Customer Discovery</div><div class="t" style="left:770px;top:633px;width:64px">C</div><div class="t" style="left:837px;top:633px;width:64px">No</div><div class="t" style="left:904px;top:633px;width:64px">Yes</div><div class="t r" style="left:969px;top:633px;width:64.5px">10</div><div class="t" style="left:1038px;top:633px;width:64px">No</div><div class="t r" style="left:1170px;top:633px;width:64.5px">3</div><div class="t" style="left:1239px;top:633px;width:64px">Warm</div><div class="t r" style="left:1304px;top:633px;width:64.5px">2</div><div class="t r" style="left:1371px;top:633px;width:64.5px">2</div><div class="t r" style="left:1438px;top:633px;width:64.5px">2025-11-16</div><div class="t" style="left:1507px;top:633px;width:260px;overflow:visible">YC alum suggested intro to PM at Roblox.</div><div class="t" style="left:33px;top:647px;width:64px">C1057</div><div class="t" style="left:100px;top:647px;width:64px">Benjamin Perez</div><div class="t" style="left:167px;top:647px;width:64px">Mentor</div><div class="t" style="left:234px;top:647px;width:64px">Harvard</div><div class="t" style="left:301px;top:647px;width:64px">founders.inc salon</div><div class="t" style="left:368px;top:647px;width:64px">2025-10-29 18:13</div><div class="t" style="left:435px;top:647px;width:64px">Boston</div><div class="t" style="left:502px;top:647px;width:64px">America/New_York</div><div class="t" style="left:569px;top:647px;width:64px">2025-11-04 18:13</div><div class="t" style="left:636px;top:647px;width:64px">Email</div><div class="t" style="left:703px;top:647px;width:64px">Recruiting/Internship</div><div class="t" style="left:770px;top:647px;width:64px">A</div><div class="t" style="left:837px;top:647px;width:64px">No</div><div class="t" style="left:904px;top:647px;width:64px">Yes</div><div class="t r" style="left:969px;top:647px;width:64.5px">5</div><div class="t" style="left:1038px;top:647px;width:64px">No</div><div class="t r" style="left:1170px;top:647px;width:64.5px">3</div><div class="t" style="left:1239px;top:647px;width:64px">Warm</div><div class="t r" style="left:1304px;top:647px;width:64.5px">1</div><div class="t r" style="left:1371px;top:647px;width:64.5px">1</div><div class="t r" style="left:1438px;top:647px;width:64.5px">2025-11-16</div><div class="t" style="left:1507px;top:647px;width:260px;overflow:visible">MIT CS junior; can advise on matching algorithm.</div><div class="t" style="left:33px;top:661px;width:64px">C1007</div><div class="t" style="left:100px;top:661px;width:64px">Kai Thomas</div><div class="t" style="left:167px;top:661px;width:64px">Founder</div><div class="t" style="left:234px;top:661px;width:64px">Figma</div><div class="t" style="left:301px;top:661px;width:64px">USC IYA Mixer (LA)</div><div class="t" style="left:368px;top:661px;width:64px">2025-11-02 11:25</div><div class="t" style="left:435px;top:661px;width:64px">Boston</div><div class="t" style="left:502px;top:661px;width:64px">America/New_York</div><div class="t" style="left:569px;top:661px;width:64px">2025-11-05 11:25</div><div class="t" style="left:636px;top:661px;width:64px">Email</div><div class="t" style="left:703px;top:661px;width:64px">Collab</div><div class="t" style="left:770px;top:661px;width:64px">A</div><div class="t" style="left:837px;top:661px;width:64px">No</div><div class="t" style="left:904px;top:661px;width:64px">No</div><div class="t" style="left:1038px;top:661px;width:64px">No</div><div class="t" style="left:1239px;top:661px;width:64px">New</div><div class="t r" style="left:1304px;top:661px;width:64.5px">4</div><div class="t r" style="left:1371px;top:661px;width:64.5px">5</div><div class="t r" style="left:1438px;top:661px;width:64.5px">2025-11-11</div><div class="t" style="left:1507px;top:661px;width:260px;overflow:visible">Investor wants 10 pilot schools before check.</div><div class="t" style="left:33px;top:675px;width:64px">C1048</div><div class="t" style="left:100px;top:675px;width:64px">Nina Clark</div><div class="t" style="left:167px;top:675px;width:64px">Founder</div><div class="t" style="left:234px;top:675px;width:64px">Pear VC</div><div class="t" style="left:301px;top:675px;width:64px">NEXTGEN Summit</div><div class="t" style="left:368px;top:675px;width:64px">2025-11-03 17:25</div><div class="t" style="left:435px;top:675px;width:64px">New York</div><div class="t" style="left:502px;top:675px;width:64px">America/New_York</div><div class="t" style="left:569px;top:675px;width:64px">2025-11-05 17:25</div><div class="t" style="left:636px;top:675px;width:64px">Instagram DM</div><div class="t" style="left:703px;top:675px;width:64px">Collab</div><div class="t" style="left:770px;top:675px;width:64px">C</div><div class="t" style="left:837px;top:675px;width:64px">No</div><div class="t" style="left:904px;top:675px;width:64px">Yes</div><div class="t r" style="left:969px;top:675px;width:64.5px">12</div><div class="t" style="left:1038px;top:675px;width:64px">No</div><div class="t r" style="left:1170px;top:675px;width:64.5px">3</div><div class="t" style="left:1239px;top:675px;width:64px">Warm</div><div class="t r" style="left:1304px;top:675px;width:64.5px">3</div><div class="t r" style="left:1371px;top:675px;width:64.5px">3</div><div class="t r" style="left:1438px;top:675px;width:64.5px">2025-11-12</div><div class="t" style="left:1507px;top:675px;width:260px;overflow:visible">Suggested running CalHacks mini-comp next semester.</div><div class="t" style="left:33px;top:689px;width:64px">C1049</div><div class="t" style="left:100px;top:689px;width:64px">Amelia Tanaka</div><div class="t" style="left:167px;top:689px;width:64px">Investor/Advisor</div><div class="t" style="left:234px;top:689px;width:64px">NYU</div><div class="t" style="left:301px;top:689px;width:64px">NEXTGEN Summit</div><div class="t" style="left:368px;top:689px;width:64px">2025-11-01 19:13</div><div class="t" style="left:435px;top:689px;width:64px">New York</div><div class="t" style="left:502px;top:689px;width:64px">America/New_York</div><div class="t" style="left:569px;top:689px;width:64px">2025-11-05 19:13</div><div class="t" style="left:636px;top:689px;width:64px">Email</div><div class="t" style="left:703px;top:689px;width:64px">Customer Discovery</div><div class="t" style="left:770px;top:689px;width:64px">B</div><div class="t" style="left:837px;top:689px;width:64px">No</div><div class="t" style="left:904px;top:689px;width:64px">Yes</div><div class="t r" style="left:969px;top:689px;width:64.5px">17</div><div class="t" style="left:1038px;top:689px;width:64px">No</div><div class="t r" style="left:1170px;top:689px;width:64.5px">3</div><div class="t" style="left:1239px;top:689px;width:64px">Warm</div><div class="t r" style="left:1304px;top:689px;width:64.5px">1</div><div class="t r" style="left:1371px;top:689px;width:64.5px">1</div><div class="t r" style="left:1438px;top:689px;width:64.5px">2025-11-12</div><div class="t" style="left:1507px;top:689px;width:260px;overflow:visible">Sequoia scout: follow up post-finals.</div><div class="t" style="left:33px;top:703px;width:64px">C1040</div><div class="t" style="left:100px;top:703px;width:64px">Remy King</div><div class="t" style="left:167px;top:703px;width:64px">Undergrad</div><div class="t" style="left:234px;top:703px;width:64px">USC IYA</div><div class="t" style="left:301px;top:703px;width:64px">NEXTGEN Summit</div><div class="t" style="left:368px;top:703px;width:64px">2025-11-02 19:44</div><div class="t" style="left:435px;top:703px;width:64px">New York</div><div class="t" style="left:502px;top:703px;width:64px">America/New_York</div><div class="t" style="left:569px;top:703px;width:64px">2025-11-05 19:44</div><div class="t" style="left:636px;top:703px;width:64px">Instagram DM</div><div class="t" style="left:703px;top:703px;width:64px">Investment</div><div class="t" style="left:770px;top:703px;width:64px">B</div><div class="t" style="left:837px;top:703px;width:64px">No</div><div class="t" style="left:904px;top:703px;width:64px">Yes</div><div class="t r" style="left:969px;top:703px;width:64.5px">7</div><div class="t" style="left:1038px;top:703px;width:64px">Yes</div><div class="t" style="left:1105px;top:703px;width:64px">2025-11-18 2:46</div><div class="t r" style="left:1170px;top:703px;width:64.5px">3</div><div class="t" style="left:1239px;top:703px;width:64px">Warm</div><div class="t r" style="left:1304px;top:703px;width:64.5px">1</div><div class="t r" style="left:1371px;top:703px;width:64.5px">1</div><div class="t r" style="left:1438px;top:703px;width:64.5px">2025-11-17</div><div class="t" style="left:1507px;top:703px;width:260px;overflow:visible">Sequoia scout: follow up post-finals.</div><div class="t" style="left:33px;top:717px;width:64px">C1013</div><div class="t" style="left:100px;top:717px;width:64px">Diego Johansson</div><div class="t" style="left:167px;top:717px;width:64px">Founder</div><div class="t" style="left:234px;top:717px;width:64px">UCLA</div><div class="t" style="left:301px;top:717px;width:64px">NEXTGEN Summit</div><div class="t" style="left:368px;top:717px;width:64px">2025-10-29 22:44</div><div class="t" style="left:435px;top:717px;width:64px">New York</div><div class="t" style="left:502px;top:717px;width:64px">America/New_York</div><div class="t" style="left:569px;top:717px;width:64px">2025-11-05 22:44</div><div class="t" style="left:636px;top:717px;width:64px">Email</div><div class="t" style="left:703px;top:717px;width:64px">Mentorship</div><div class="t" style="left:770px;top:717px;width:64px">C</div><div class="t" style="left:837px;top:717px;width:64px">No</div><div class="t" style="left:904px;top:717px;width:64px">Yes</div><div class="t r" style="left:969px;top:717px;width:64.5px">236</div><div class="t" style="left:1038px;top:717px;width:64px">No</div><div class="t r" style="left:1170px;top:717px;width:64.5px">3</div><div class="t" style="left:1239px;top:717px;width:64px">Warm</div><div class="t r" style="left:1304px;top:717px;width:64.5px">1</div><div class="t r" style="left:1371px;top:717px;width:64.5px">1</div><div class="t r" style="left:1438px;top:717px;width:64.5px">2025-11-10</div><div class="t" style="left:1507px;top:717px;width:260px;overflow:visible">Sequoia scout: follow up post-finals.</div><div class="t" style="left:33px;top:731px;width:64px">C1024</div><div class="t" style="left:100px;top:731px;width:64px">Noa Costa</div><div class="t" style="left:167px;top:731px;width:64px">Investor/Advisor</div><div class="t" style="left:234px;top:731px;width:64px">Figma</div><div class="t" style="left:301px;top:731px;width:64px">USC IYA Mixer (LA)</div><div class="t" style="left:368px;top:731px;width:64px">2025-11-04 11:13</div><div class="t" style="left:435px;top:731px;width:64px">Berkeley</div><div class="t" style="left:502px;top:731px;width:64px">America/Los_Angeles</div><div class="t" style="left:569px;top:731px;width:64px">2025-11-06 11:13</div><div class="t" style="left:636px;top:731px;width:64px">WhatsApp</div><div class="t" style="left:703px;top:731px;width:64px">Collab</div><div class="t" style="left:770px;top:731px;width:64px">B</div><div class="t" style="left:837px;top:731px;width:64px">No</div><div class="t" style="left:904px;top:731px;width:64px">Yes</div><div class="t r" style="left:969px;top:731px;width:64.5px">87</div><div class="t" style="left:1038px;top:731px;width:64px">No</div><div class="t r" style="left:1170px;top:731px;width:64.5px">3</div><div class="t" style="left:1239px;top:731px;width:64px">Lost</div><div class="t r" style="left:1304px;top:731px;width:64.5px">0</div><div class="t r" style="left:1371px;top:731px;width:64.5px">0</div><div class="t" style="left:1507px;top:731px;width:260px;overflow:visible">GV design lead open to portfolio review.</div><div class="t" style="left:33px;top:745px;width:64px">C1009</div><div class="t" style="left:100px;top:745px;width:64px">Aria Ng</div><div class="t" style="left:167px;top:745px;width:64px">Mentor</div><div class="t" style="left:234px;top:745px;width:64px">Sequoia Scout</div><div class="t" style="left:301px;top:745px;width:64px">USC IYA Mixer (LA)</div><div class="t" style="left:368px;top:745px;width:64px">2025-11-04 11:13</div><div class="t" style="left:435px;top:745px;width:64px">San Francisco</div><div class="t" style="left:502px;top:745px;width:64px">America/Los_Angeles</div><div class="t" style="left:569px;top:745px;width:64px">2025-11-06 11:13</div><div class="t" style="left:636px;top:745px;width:64px">Email</div><div class="t" style="left:703px;top:745px;width:64px">Collab</div><div class="t" style="left:770px;top:745px;width:64px">C</div><div class="t" style="left:837px;top:745px;width:64px">No</div><div class="t" style="left:904px;top:745px;width:64px">Yes</div><div class="t r" style="left:969px;top:745px;width:64.5px">60</div><div class="t" style="left:1038px;top:745px;width:64px">No</div><div class="t r" style="left:1170px;top:745px;width:64.5px">2</div><div class="t" style="left:1239px;top:745px;width:64px">Lost</div><div class="t r" style="left:1304px;top:745px;width:64.5px">2</div><div class="t r" style="left:1371px;top:745px;width:64.5px">2</div><div class="t" style="left:1507px;top:745px;width:260px;overflow:visible">GV design lead open to portfolio review.</div><div class="t" style="left:33px;top:759px;width:64px">C1030</div><div class="t" style="left:100px;top:759px;width:64px">Aria Chen</div><div class="t" style="left:167px;top:759px;width:64px">Founder</div><div class="t" style="left:234px;top:759px;width:64px">USC IYA</div><div class="t" style="left:301px;top:759px;width:64px">USC IYA Mixer (LA)</div><div class="t" style="left:368px;top:759px;width:64px">2025-11-05 13:55</div><div class="t" style="left:435px;top:759px;width:64px">Palo Alto</div><div class="t" style="left:502px;top:759px;width:64px">America/Los_Angeles</div><div class="t" style="left:569px;top:759px;width:64px">2025-11-06 13:55</div><div class="t" style="left:636px;top:759px;width:64px">LinkedIn</div><div class="t" style="left:703px;top:759px;width:64px">Customer Discovery</div><div class="t" style="left:770px;top:759px;width:64px">C</div><div class="t" style="left:837px;top:759px;width:64px">No</div><div class="t" style="left:904px;top:759px;width:64px">Yes</div><div class="t r" style="left:969px;top:759px;width:64.5px">3</div><div class="t" style="left:1038px;top:759px;width:64px">Yes</div><div class="t" style="left:1105px;top:759px;width:64px">2025-11-09 16:55</div><div class="t r" style="left:1170px;top:759px;width:64.5px">4</div><div class="t" style="left:1239px;top:759px;width:64px">Warm</div><div class="t r" style="left:1304px;top:759px;width:64.5px">2</div><div class="t r" style="left:1371px;top:759px;width:64.5px">2</div><div class="t r" style="left:1438px;top:759px;width:64.5px">2025-11-17</div><div class="t" style="left:1507px;top:759px;width:260px;overflow:visible">Interested in mentorship; prefers early mornings PST.</div><div class="t" style="left:33px;top:773px;width:64px">C1002</div><div class="t" style="left:100px;top:773px;width:64px">Aria Weiss</div><div class="t" style="left:167px;top:773px;width:64px">Undergrad</div><div class="t" style="left:234px;top:773px;width:64px">Figma</div><div class="t" style="left:301px;top:773px;width:64px">founders.inc salon</div><div class="t" style="left:368px;top:773px;width:64px">2025-10-30 16:33</div><div class="t" style="left:435px;top:773px;width:64px">Berkeley</div><div class="t" style="left:502px;top:773px;width:64px">America/Los_Angeles</div><div class="t" style="left:569px;top:773px;width:64px">2025-11-06 16:33</div><div class="t" style="left:636px;top:773px;width:64px">SMS</div><div class="t" style="left:703px;top:773px;width:64px">Mentorship</div><div class="t" style="left:770px;top:773px;width:64px">B</div><div class="t" style="left:837px;top:773px;width:64px">No</div><div class="t" style="left:904px;top:773px;width:64px">Yes</div><div class="t r" style="left:969px;top:773px;width:64.5px">1</div><div class="t" style="left:1038px;top:773px;width:64px">No</div><div class="t r" style="left:1170px;top:773px;width:64.5px">3</div><div class="t" style="left:1239px;top:773px;width:64px">Warm</div><div class="t r" style="left:1304px;top:773px;width:64.5px">1</div><div class="t r" style="left:1371px;top:773px;width:64.5px">1</div><div class="t r" style="left:1438px;top:773px;width:64.5px">2025-11-20</div><div class="t" style="left:1507px;top:773px;width:260px;overflow:visible">Pear VC: wants traction metrics before intro.</div><div class="t" style="left:33px;top:787px;width:64px">C1042</div><div class="t" style="left:100px;top:787px;width:64px">Alexander Allen</div><div class="t" style="left:167px;top:787px;width:64px">Undergrad</div><div class="t" style="left:234px;top:787px;width:64px">Sequoia Scout</div><div class="t" style="left:301px;top:787px;width:64px">USC IYA Mixer (LA)</div><div class="t" style="left:368px;top:787px;width:64px">2025-11-02 18:33</div><div class="t" style="left:435px;top:787px;width:64px">Berkeley</div><div class="t" style="left:502px;top:787px;width:64px">America/Los_Angeles</div><div class="t" style="left:569px;top:787px;width:64px">2025-11-06 18:33</div><div class="t" style="left:636px;top:787px;width:64px">SMS</div><div class="t" style="left:703px;top:787px;width:64px">Collab</div><div class="t" style="left:770px;top:787px;width:64px">B</div><div class="t" style="left:837px;top:787px;width:64px">No</div><div class="t" style="left:904px;top:787px;width:64px">Yes</div><div class="t r" style="left:969px;top:787px;width:64.5px">9</div><div class="t" style="left:1038px;top:787px;width:64px">No</div><div class="t r" style="left:1170px;top:787px;width:64.5px">4</div><div class="t" style="left:1239px;top:787px;width:64px">Warm</div><div class="t r" style="left:1304px;top:787px;width:64.5px">2</div><div class="t r" style="left:1371px;top:787px;width:64.5px">2</div><div class="t r" style="left:1438px;top:787px;width:64.5px">2025-11-13</div><div class="t" style="left:1507px;top:787px;width:260px;overflow:visible">YC alum suggested intro to PM at Roblox.</div><div class="t" style="left:33px;top:801px;width:64px">C1045</div><div class="t" style="left:100px;top:801px;width:64px">Ethan Nguyen</div><div class="t" style="left:167px;top:801px;width:64px">Founder</div><div class="t" style="left:234px;top:801px;width:64px">Northeastern</div><div class="t" style="left:301px;top:801px;width:64px">founders.inc salon</div><div class="t" style="left:368px;top:801px;width:64px">2025-11-02 22:44</div><div class="t" style="left:435px;top:801px;width:64px">Los Angeles</div><div class="t" style="left:502px;top:801px;width:64px">America/Los_Angeles</div><div class="t" style="left:569px;top:801px;width:64px">2025-11-06 22:44</div><div class="t" style="left:636px;top:801px;width:64px">LinkedIn</div><div class="t" style="left:703px;top:801px;width:64px">Mentorship</div><div class="t" style="left:770px;top:801px;width:64px">C</div><div class="t" style="left:837px;top:801px;width:64px">No</div><div class="t" style="left:904px;top:801px;width:64px">Yes</div><div class="t r" style="left:969px;top:801px;width:64.5px">7</div><div class="t" style="left:1038px;top:801px;width:64px">No</div><div class="t r" style="left:1170px;top:801px;width:64.5px">3</div><div class="t" style="left:1239px;top:801px;width:64px">Warm</div><div class="t r" style="left:1304px;top:801px;width:64.5px">1</div><div class="t r" style="left:1371px;top:801px;width:64.5px">1</div><div class="t r" style="left:1438px;top:801px;width:64.5px">2025-11-20</div><div class="t" style="left:1507px;top:801px;width:260px;overflow:visible">GV design lead open to portfolio review.</div><div class="t" style="left:33px;top:815px;width:64px">C1043</div><div class="t" style="left:100px;top:815px;width:64px">Grace Ito</div><div class="t" style="left:167px;top:815px;width:64px">Founder</div><div class="t" style="left:234px;top:815px;width:64px">Roblox</div><div class="t" style="left:301px;top:815px;width:64px">NEXTGEN Summit</div><div class="t" style="left:368px;top:815px;width:64px">2025-11-03 14:25</div><div class="t" style="left:435px;top:815px;width:64px">New York</div><div class="t" style="left:502px;top:815px;width:64px">America/New_York</div><div class="t" style="left:569px;top:815px;width:64px">2025-11-07 14:25</div><div class="t" style="left:636px;top:815px;width:64px">SMS</div><div class="t" style="left:703px;top:815px;width:64px">Investment</div><div class="t" style="left:770px;top:815px;width:64px">B</div><div class="t" style="left:837px;top:815px;width:64px">No</div><div class="t" style="left:904px;top:815px;width:64px">Yes</div><div class="t r" style="left:969px;top:815px;width:64.5px">11</div><div class="t" style="left:1038px;top:815px;width:64px">Yes</div><div class="t" style="left:1105px;top:815px;width:64px">2025-11-17 1:29</div><div class="t r" style="left:1170px;top:815px;width:64.5px">3</div><div class="t" style="left:1239px;top:815px;width:64px">Meeting Set</div><div class="t r" style="left:1304px;top:815px;width:64.5px">2</div><div class="t r" style="left:1371px;top:815px;width:64.5px">2</div><div class="t r" style="left:1438px;top:815px;width:64.5px">2025-11-12</div><div class="t" style="left:1507px;top:815px;width:260px;overflow:visible">Investor wants 10 pilot schools before check.</div><div class="t" style="left:33px;top:829px;width:64px">C1041</div><div class="t" style="left:100px;top:829px;width:64px">Zara Yamamoto</div><div class="t" style="left:167px;top:829px;width:64px">Founder</div><div class="t" style="left:234px;top:829px;width:64px">Stanford</div><div class="t" style="left:301px;top:829px;width:64px">USC IYA Mixer (LA)</div><div class="t" style="left:368px;top:829px;width:64px">2025-11-03 17:13</div><div class="t" style="left:435px;top:829px;width:64px">Palo Alto</div><div class="t" style="left:502px;top:829px;width:64px">America/Los_Angeles</div><div class="t" style="left:569px;top:829px;width:64px">2025-11-07 17:13</div><div class="t" style="left:636px;top:829px;width:64px">SMS</div><div class="t" style="left:703px;top:829px;width:64px">Collab</div><div class="t" style="left:770px;top:829px;width:64px">B</div><div class="t" style="left:837px;top:829px;width:64px">No</div><div class="t" style="left:904px;top:829px;width:64px">Yes</div><div class="t r" style="left:969px;top:829px;width:64.5px">33</div><div class="t" style="left:1038px;top:829px;width:64px">No</div><div class="t r" style="left:1170px;top:829px;width:64.5px">3</div><div class="t" style="left:1239px;top:829px;width:64px">Warm</div><div class="t r" style="left:1304px;top:829px;width:64.5px">2</div><div class="t r" style="left:1371px;top:829px;width:64.5px">2</div><div class="t r" style="left:1438px;top:829px;width:64.5px">2025-11-18</div><div class="t" style="left:1507px;top:829px;width:260px;overflow:visible">Interested in mentorship; prefers early mornings PST.</div><div class="t" style="left:33px;top:843px;width:64px">C1019</div><div class="t" style="left:100px;top:843px;width:64px">Olivia Costa</div><div class="t" style="left:167px;top:843px;width:64px">Founder</div><div class="t" style="left:234px;top:843px;width:64px">Roblox</div><div class="t" style="left:301px;top:843px;width:64px">NEXTGEN Summit</div><div class="t" style="left:368px;top:843px;width:64px">2025-11-01 12:55</div><div class="t" style="left:435px;top:843px;width:64px">New York</div><div class="t" style="left:502px;top:843px;width:64px">America/New_York</div><div class="t" style="left:569px;top:843px;width:64px">2025-11-08 12:55</div><div class="t" style="left:636px;top:843px;width:64px">Email</div><div class="t" style="left:703px;top:843px;width:64px">Investment</div><div class="t" style="left:770px;top:843px;width:64px">C</div><div class="t" style="left:837px;top:843px;width:64px">No</div><div class="t" style="left:904px;top:843px;width:64px">No</div><div class="t" style="left:1038px;top:843px;width:64px">No</div><div class="t" style="left:1239px;top:843px;width:64px">New</div><div class="t r" style="left:1304px;top:843px;width:64.5px">3</div><div class="t r" style="left:1371px;top:843px;width:64.5px">4</div><div class="t r" style="left:1438px;top:843px;width:64.5px">2025-11-14</div><div class="t" style="left:1507px;top:843px;width:260px;overflow:visible">Wants data on campus challenges; asked for deck.</div><div class="t" style="left:33px;top:857px;width:64px">C1016</div><div class="t" style="left:100px;top:857px;width:64px">Luca Thomas</div><div class="t" style="left:167px;top:857px;width:64px">Investor/Advisor</div><div class="t" style="left:234px;top:857px;width:64px">NYU</div><div class="t" style="left:301px;top:857px;width:64px">NEXTGEN Summit</div><div class="t" style="left:368px;top:857px;width:64px">2025-11-02 15:13</div><div class="t" style="left:435px;top:857px;width:64px">New York</div><div class="t" style="left:502px;top:857px;width:64px">America/New_York</div><div class="t" style="left:569px;top:857px;width:64px">2025-11-08 15:13</div><div class="t" style="left:636px;top:857px;width:64px">Email</div><div class="t" style="left:703px;top:857px;width:64px">Mentorship</div><div class="t" style="left:770px;top:857px;width:64px">B</div><div class="t" style="left:837px;top:857px;width:64px">No</div><div class="t" style="left:904px;top:857px;width:64px">Yes</div><div class="t r" style="left:969px;top:857px;width:64.5px">152</div><div class="t" style="left:1038px;top:857px;width:64px">Yes</div><div class="t" style="left:1105px;top:857px;width:64px">2025-11-26 23:13</div><div class="t r" style="left:1170px;top:857px;width:64.5px">3</div><div class="t" style="left:1239px;top:857px;width:64px">Warm</div><div class="t r" style="left:1304px;top:857px;width:64.5px">2</div><div class="t r" style="left:1371px;top:857px;width:64.5px">2</div><div class="t r" style="left:1438px;top:857px;width:64.5px">2025-11-16</div><div class="t" style="left:1507px;top:857px;width:260px;overflow:visible">Founder building social infra; possible collab.</div><div class="t" style="left:33px;top:871px;width:64px">C1054</div><div class="t" style="left:100px;top:871px;width:64px">Mateo Patel</div><div class="t" style="left:167px;top:871px;width:64px">Mentor</div><div class="t" style="left:234px;top:871px;width:64px">Sequoia Scout</div><div class="t" style="left:301px;top:871px;width:64px">NEXTGEN Summit</div><div class="t" style="left:368px;top:871px;width:64px">2025-11-02 19:05</div><div class="t" style="left:435px;top:871px;width:64px">New York</div><div class="t" style="left:502px;top:871px;width:64px">America/New_York</div><div class="t" style="left:569px;top:871px;width:64px">2025-11-08 19:05</div><div class="t" style="left:636px;top:871px;width:64px">SMS</div><div class="t" style="left:703px;top:871px;width:64px">Recruiting/Internship</div><div class="t" style="left:770px;top:871px;width:64px">C</div><div class="t" style="left:837px;top:871px;width:64px">No</div><div class="t" style="left:904px;top:871px;width:64px">Yes</div><div class="t r" style="left:969px;top:871px;width:64.5px">7</div><div class="t" style="left:1038px;top:871px;width:64px">Yes</div><div class="t" style="left:1105px;top:871px;width:64px">2025-11-18 2:01</div><div class="t r" style="left:1170px;top:871px;width:64.5px">4</div><div class="t" style="left:1239px;top:871px;width:64px">Warm</div><div class="t r" style="left:1304px;top:871px;width:64.5px">0</div><div class="t r" style="left:1371px;top:871px;width:64.5px">0</div><div class="t r" style="left:1438px;top:871px;width:64.5px">2025-11-11</div><div class="t" style="left:1507px;top:871px;width:260px;overflow:visible">Designer at Notion, offered UI critique session.</div><div class="t" style="left:33px;top:885px;width:64px">C1000</div><div class="t" style="left:100px;top:885px;width:64px">Kai Martinez</div><div class="t" style="left:167px;top:885px;width:64px">Founder</div><div class="t" style="left:234px;top:885px;width:64px">USC IYA</div><div class="t" style="left:301px;top:885px;width:64px">USC IYA Mixer (LA)</div><div class="t" style="left:368px;top:885px;width:64px">2025-11-03 12:13</div><div class="t" style="left:435px;top:885px;width:64px">San Francisco</div><div class="t" style="left:502px;top:885px;width:64px">America/Los_Angeles</div><div class="t" style="left:569px;top:885px;width:64px">2025-11-09 12:13</div><div class="t" style="left:636px;top:885px;width:64px">Instagram DM</div><div class="t" style="left:703px;top:885px;width:64px">Investment</div><div class="t" style="left:770px;top:885px;width:64px">A</div><div class="t" style="left:837px;top:885px;width:64px">Yes</div><div class="t" style="left:904px;top:885px;width:64px">No</div><div class="t" style="left:1038px;top:885px;width:64px">No</div><div class="t" style="left:1239px;top:885px;width:64px">New</div><div class="t r" style="left:1304px;top:885px;width:64.5px">0</div><div class="t r" style="left:1371px;top:885px;width:64.5px">1</div><div class="t r" style="left:1438px;top:885px;width:64.5px">2025-11-22</div><div class="t" style="left:1507px;top:885px;width:260px;overflow:visible">GV design lead open to portfolio review.</div><div class="t" style="left:33px;top:899px;width:64px">C1005</div><div class="t" style="left:100px;top:899px;width:64px">Remy Brown</div><div class="t" style="left:167px;top:899px;width:64px">Investor/Advisor</div><div class="t" style="left:234px;top:899px;width:64px">MIT</div><div class="t" style="left:301px;top:899px;width:64px">USC IYA Mixer (LA)</div><div class="t" style="left:368px;top:899px;width:64px">2025-11-02 21:13</div><div class="t" style="left:435px;top:899px;width:64px">Los Angeles</div><div class="t" style="left:502px;top:899px;width:64px">America/Los_Angeles</div><div class="t" style="left:569px;top:899px;width:64px">2025-11-09 21:13</div><div class="t" style="left:636px;top:899px;width:64px">Email</div><div class="t" style="left:703px;top:899px;width:64px">Mentorship</div><div class="t" style="left:770px;top:899px;width:64px">A</div><div class="t" style="left:837px;top:899px;width:64px">No</div><div class="t" style="left:904px;top:899px;width:64px">Yes</div><div class="t r" style="left:969px;top:899px;width:64.5px">4</div><div class="t" style="left:1038px;top:899px;width:64px">No</div><div class="t r" style="left:1170px;top:899px;width:64.5px">4</div><div class="t" style="left:1239px;top:899px;width:64px">Warm</div><div class="t r" style="left:1304px;top:899px;width:64.5px">3</div><div class="t r" style="left:1371px;top:899px;width:64.5px">3</div><div class="t r" style="left:1438px;top:899px;width:64.5px">2025-11-16</div><div class="t" style="left:1507px;top:899px;width:260px;overflow:visible">Founder building social infra; possible collab.</div><div class="t" style="left:33px;top:913px;width:64px">C1044</div><div class="t" style="left:100px;top:913px;width:64px">Liam Harris</div><div class="t" style="left:167px;top:913px;width:64px">Founder</div><div class="t" style="left:234px;top:913px;width:64px">Notion</div><div class="t" style="left:301px;top:913px;width:64px">USC IYA Mixer (LA)</div><div class="t" style="left:368px;top:913px;width:64px">2025-11-05 14:05</div><div class="t" style="left:435px;top:913px;width:64px">New York</div><div class="t" style="left:502px;top:913px;width:64px">America/New_York</div><div class="t" style="left:569px;top:913px;width:64px">2025-11-12 14:05</div><div class="t" style="left:636px;top:913px;width:64px">WhatsApp</div><div class="t" style="left:703px;top:913px;width:64px">Customer Discovery</div><div class="t" style="left:770px;top:913px;width:64px">B</div><div class="t" style="left:837px;top:913px;width:64px">No</div><div class="t" style="left:904px;top:913px;width:64px">Yes</div><div class="t r" style="left:969px;top:913px;width:64.5px">4</div><div class="t" style="left:1038px;top:913px;width:64px">No</div><div class="t r" style="left:1170px;top:913px;width:64.5px">3</div><div class="t" style="left:1239px;top:913px;width:64px">Warm</div><div class="t r" style="left:1304px;top:913px;width:64.5px">1</div><div class="t r" style="left:1371px;top:913px;width:64.5px">1</div><div class="t r" style="left:1438px;top:913px;width:64.5px">2025-11-18</div><div class="t" style="left:1507px;top:913px;width:260px;overflow:visible">Interested in mentorship; prefers early mornings PST.</div><div class="a" style="left:1638px;top:115px;width:1px;height:13px;background:#fff"></div><div class="a" style="left:1638px;top:129px;width:1px;height:13px;background:#fff"></div><div class="a" style="left:1638px;top:143px;width:1px;height:13px;background:#fff"></div><div class="a" style="left:1638px;top:157px;width:1px;height:13px;background:#fff"></div><div class="a" style="left:1705px;top:157px;width:1px;height:13px;background:#fff"></div><div class="a" style="left:1638px;top:171px;width:1px;height:13px;background:#fff"></div><div class="a" style="left:1638px;top:185px;width:1px;height:13px;background:#fff"></div><div class="a" style="left:1638px;top:199px;width:1px;height:13px;background:#fff"></div><div class="a" style="left:1638px;top:213px;width:1px;height:13px;background:#fff"></div><div class="a" style="left:1705px;top:213px;width:1px;height:13px;background:#fff"></div><div class="a" style="left:1638px;top:227px;width:1px;height:13px;background:#fff"></div><div class="a" style="left:1638px;top:241px;width:1px;height:13px;background:#fff"></div><div class="a" style="left:1705px;top:241px;width:1px;height:13px;background:#fff"></div><div class="a" style="left:1638px;top:255px;width:1px;height:13px;background:#fff"></div><div class="a" style="left:1705px;top:255px;width:1px;height:13px;background:#fff"></div><div class="a" style="left:1638px;top:269px;width:1px;height:13px;background:#fff"></div><div class="a" style="left:1638px;top:283px;width:1px;height:13px;background:#fff"></div><div class="a" style="left:1705px;top:283px;width:1px;height:13px;background:#fff"></div><div class="a" style="left:1638px;top:297px;width:1px;height:13px;background:#fff"></div><div class="a" style="left:1705px;top:297px;width:1px;height:13px;background:#fff"></div><div class="a" style="left:1638px;top:311px;width:1px;height:13px;background:#fff"></div><div class="a" style="left:1705px;top:311px;width:1px;height:13px;background:#fff"></div><div class="a" style="left:1638px;top:325px;width:1px;height:13px;background:#fff"></div><div class="a" style="left:1638px;top:339px;width:1px;height:13px;background:#fff"></div><div class="a" style="left:1638px;top:353px;width:1px;height:13px;background:#fff"></div><div class="a" style="left:1638px;top:367px;width:1px;height:13px;background:#fff"></div><div class="a" style="left:1638px;top:381px;width:1px;height:13px;background:#fff"></div><div class="a" style="left:1638px;top:395px;width:1px;height:13px;background:#fff"></div><div class="a" style="left:1638px;top:409px;width:1px;height:13px;background:#fff"></div><div class="a" style="left:1638px;top:423px;width:1px;height:13px;background:#fff"></div><div class="a" style="left:1638px;top:437px;width:1px;height:13px;background:#fff"></div><div class="a" style="left:1638px;top:451px;width:1px;height:13px;background:#fff"></div><div class="a" style="left:1638px;top:465px;width:1px;height:13px;background:#fff"></div><div class="a" style="left:1638px;top:479px;width:1px;height:13px;background:#fff"></div><div class="a" style="left:1638px;top:493px;width:1px;height:13px;background:#fff"></div><div class="a" style="left:1638px;top:507px;width:1px;height:13px;background:#fff"></div><div class="a" style="left:1638px;top:521px;width:1px;height:13px;background:#fff"></div><div class="a" style="left:1638px;top:535px;width:1px;height:13px;background:#fff"></div><div class="a" style="left:1705px;top:535px;width:1px;height:13px;background:#fff"></div><div class="a" style="left:1638px;top:549px;width:1px;height:13px;background:#fff"></div><div class="a" style="left:1638px;top:563px;width:1px;height:13px;background:#fff"></div><div class="a" style="left:1638px;top:577px;width:1px;height:13px;background:#fff"></div><div class="a" style="left:1638px;top:591px;width:1px;height:13px;background:#fff"></div><div class="a" style="left:1638px;top:605px;width:1px;height:13px;background:#fff"></div><div class="a" style="left:1638px;top:619px;width:1px;height:13px;background:#fff"></div><div class="a" style="left:1638px;top:633px;width:1px;height:13px;background:#fff"></div><div class="a" style="left:1638px;top:647px;width:1px;height:13px;background:#fff"></div><div class="a" style="left:1638px;top:661px;width:1px;height:13px;background:#fff"></div><div class="a" style="left:1638px;top:675px;width:1px;height:13px;background:#fff"></div><div class="a" style="left:1705px;top:675px;width:1px;height:13px;background:#fff"></div><div class="a" style="left:1638px;top:689px;width:1px;height:13px;background:#fff"></div><div class="a" style="left:1638px;top:703px;width:1px;height:13px;background:#fff"></div><div class="a" style="left:1638px;top:717px;width:1px;height:13px;background:#fff"></div><div class="a" style="left:1638px;top:731px;width:1px;height:13px;background:#fff"></div><div class="a" style="left:1638px;top:745px;width:1px;height:13px;background:#fff"></div><div class="a" style="left:1638px;top:759px;width:1px;height:13px;background:#fff"></div><div class="a" style="left:1705px;top:759px;width:1px;height:13px;background:#fff"></div><div class="a" style="left:1638px;top:773px;width:1px;height:13px;background:#fff"></div><div class="a" style="left:1638px;top:787px;width:1px;height:13px;background:#fff"></div><div class="a" style="left:1638px;top:801px;width:1px;height:13px;background:#fff"></div><div class="a" style="left:1638px;top:815px;width:1px;height:13px;background:#fff"></div><div class="a" style="left:1638px;top:829px;width:1px;height:13px;background:#fff"></div><div class="a" style="left:1705px;top:829px;width:1px;height:13px;background:#fff"></div><div class="a" style="left:1638px;top:843px;width:1px;height:13px;background:#fff"></div><div class="a" style="left:1705px;top:843px;width:1px;height:13px;background:#fff"></div><div class="a" style="left:1638px;top:857px;width:1px;height:13px;background:#fff"></div><div class="a" style="left:1638px;top:871px;width:1px;height:13px;background:#fff"></div><div class="a" style="left:1638px;top:885px;width:1px;height:13px;background:#fff"></div><div class="a" style="left:1638px;top:899px;width:1px;height:13px;background:#fff"></div><div class="a" style="left:1638px;top:913px;width:1px;height:13px;background:#fff"></div><div class="a" style="left:1705px;top:913px;width:1px;height:13px;background:#fff"></div><div class="a" style="z-index:3;left:834px;top:436px;width:67.5px;height:15px;border:1.5px solid #1b66d8"></div><div class="a" style="z-index:3;left:898px;top:447.5px;width:8px;height:8px;border-radius:50%;background:#1b5fd0;border:1px solid #fff"></div><div class="a" style="z-index:3;left:1571px;top:111px;width:1px;height:815px;background:repeating-linear-gradient(to bottom,#7d8698 0 3px,transparent 3px 5px)"></div><div class="a" style="z-index:3;left:31px;top:926px;width:1541px;height:1px;background:repeating-linear-gradient(to right,#7d8698 0 3px,transparent 3px 5px)"></div><svg class="a" style="left:62px;top:955px;text-rendering:geometricPrecision" width="264" height="164" viewBox="62 955 264 164"><rect x="62" y="955" width="264" height="164" fill="#fff"/><line x1="81.5" y1="1101.3" x2="322.8" y2="1101.3" stroke="#e4e4e4" stroke-width="0.5" stroke-dasharray="2 1"/><line x1="81.5" y1="1084.1" x2="322.8" y2="1084.1" stroke="#e4e4e4" stroke-width="0.5" stroke-dasharray="2 1"/><line x1="81.5" y1="1066.9" x2="322.8" y2="1066.9" stroke="#e4e4e4" stroke-width="0.5" stroke-dasharray="2 1"/><line x1="81.5" y1="1049.7" x2="322.8" y2="1049.7" stroke="#e4e4e4" stroke-width="0.5" stroke-dasharray="2 1"/><line x1="81.5" y1="1032.5" x2="322.8" y2="1032.5" stroke="#e4e4e4" stroke-width="0.5" stroke-dasharray="2 1"/><line x1="81.5" y1="1015.3" x2="322.8" y2="1015.3" stroke="#e4e4e4" stroke-width="0.5" stroke-dasharray="2 1"/><line x1="81.5" y1="998.1" x2="322.8" y2="998.1" stroke="#e4e4e4" stroke-width="0.5" stroke-dasharray="2 1"/><line x1="81.5" y1="980.9" x2="322.8" y2="980.9" stroke="#e4e4e4" stroke-width="0.5" stroke-dasharray="2 1"/><line x1="115.4" y1="966.3" x2="115.4" y2="1101.3" stroke="#e4e4e4" stroke-width="0.5" stroke-dasharray="2 1"/><line x1="173.1" y1="966.3" x2="173.1" y2="1101.3" stroke="#e4e4e4" stroke-width="0.5" stroke-dasharray="2 1"/><line x1="230.9" y1="966.3" x2="230.9" y2="1101.3" stroke="#e4e4e4" stroke-width="0.5" stroke-dasharray="2 1"/><line x1="288.5" y1="966.3" x2="288.5" y2="1101.3" stroke="#e4e4e4" stroke-width="0.5" stroke-dasharray="2 1"/><rect x="92.4" y="983.2" width="46" height="118.1" fill="#d9a13a"/><rect x="150.1" y="1008.0" width="46" height="93.3" fill="#d9a13a"/><rect x="207.9" y="972.6" width="46" height="128.7" fill="#d9a13a"/><rect x="265.5" y="986.8" width="46" height="114.5" fill="#d9a13a"/><line x1="115.4" y1="966.3" x2="115.4" y2="1101.3" stroke="#ffffff" stroke-opacity="0.12" stroke-width="0.5"/><line x1="173.1" y1="966.3" x2="173.1" y2="1101.3" stroke="#ffffff" stroke-opacity="0.12" stroke-width="0.5"/><line x1="230.9" y1="966.3" x2="230.9" y2="1101.3" stroke="#ffffff" stroke-opacity="0.12" stroke-width="0.5"/><line x1="288.5" y1="966.3" x2="288.5" y2="1101.3" stroke="#ffffff" stroke-opacity="0.12" stroke-width="0.5"/><path d="M81.5 966.3V1101.3H322.8" fill="none" stroke="#6a6a6a" stroke-width="0.9"/><line x1="81.5" y1="1101.3" x2="83.1" y2="1101.3" stroke="#6a6a6a" stroke-width="0.6"/><line x1="81.5" y1="1084.1" x2="83.1" y2="1084.1" stroke="#6a6a6a" stroke-width="0.6"/><line x1="81.5" y1="1066.9" x2="83.1" y2="1066.9" stroke="#6a6a6a" stroke-width="0.6"/><line x1="81.5" y1="1049.7" x2="83.1" y2="1049.7" stroke="#6a6a6a" stroke-width="0.6"/><line x1="81.5" y1="1032.5" x2="83.1" y2="1032.5" stroke="#6a6a6a" stroke-width="0.6"/><line x1="81.5" y1="1015.3" x2="83.1" y2="1015.3" stroke="#6a6a6a" stroke-width="0.6"/><line x1="81.5" y1="998.1" x2="83.1" y2="998.1" stroke="#6a6a6a" stroke-width="0.6"/><line x1="81.5" y1="980.9" x2="83.1" y2="980.9" stroke="#6a6a6a" stroke-width="0.6"/><line x1="115.4" y1="1101.3" x2="115.4" y2="1099.7" stroke="#6a6a6a" stroke-width="0.6"/><line x1="173.1" y1="1101.3" x2="173.1" y2="1099.7" stroke="#6a6a6a" stroke-width="0.6"/><line x1="230.9" y1="1101.3" x2="230.9" y2="1099.7" stroke="#6a6a6a" stroke-width="0.6"/><line x1="288.5" y1="1101.3" x2="288.5" y2="1099.7" stroke="#6a6a6a" stroke-width="0.6"/><text x="79.3" y="1103.1" font-size="6.0" font-family="Liberation Sans" text-anchor="end" fill="#333">0</text><text x="79.3" y="1085.9" font-size="6.0" font-family="Liberation Sans" text-anchor="end" fill="#333">5</text><text x="79.3" y="1068.7" font-size="6.0" font-family="Liberation Sans" text-anchor="end" fill="#333">10</text><text x="79.3" y="1051.5" font-size="6.0" font-family="Liberation Sans" text-anchor="end" fill="#333">15</text><text x="79.3" y="1034.3" font-size="6.0" font-family="Liberation Sans" text-anchor="end" fill="#333">20</text><text x="79.3" y="1017.1" font-size="6.0" font-family="Liberation Sans" text-anchor="end" fill="#333">25</text><text x="79.3" y="999.9" font-size="6.0" font-family="Liberation Sans" text-anchor="end" fill="#333">30</text><text x="79.3" y="982.7" font-size="6.0" font-family="Liberation Sans" text-anchor="end" fill="#333">35</text><text x="115.4" y="1107.1" font-size="5.9" font-family="Liberation Sans" text-anchor="middle" fill="#333">&lt;24h</text><text x="173.1" y="1107.1" font-size="5.9" font-family="Liberation Sans" text-anchor="middle" fill="#333">1-3d</text><text x="230.9" y="1107.1" font-size="5.9" font-family="Liberation Sans" text-anchor="middle" fill="#333">3-7d</text><text x="288.5" y="1107.1" font-size="5.9" font-family="Liberation Sans" text-anchor="middle" fill="#333">7d+</text><text x="202" y="1114.8" font-size="6.2" font-family="Liberation Sans" text-anchor="middle" fill="#333">Reply Speed Category</text><g transform="translate(69.6 1033.7) rotate(-90)"><text x="0" y="0" font-size="6.2" font-family="Liberation Sans" text-anchor="middle" fill="#333">Meeting Rate (%)</text></g><rect x="95.6" y="958.2" width="3.2" height="5.6" fill="none" stroke="#777" stroke-width="0.5"/><text x="101.9" y="963.8" font-size="7.2" font-family="Liberation Sans" font-weight="bold" text-anchor="start" fill="#222" textLength="206.7" lengthAdjust="spacingAndGlyphs">Speed Creates Opportunity: Reply Time vs Meeting Rate</text></svg><svg class="a" style="left:431px;top:970px;text-rendering:geometricPrecision" width="206" height="148" viewBox="431 970 206 148"><rect x="431" y="970" width="206" height="148" fill="#fff"/><line x1="448.4" y1="1102.2" x2="633.8" y2="1102.2" stroke="#e4e4e4" stroke-width="0.5" stroke-dasharray="2 1"/><line x1="448.4" y1="1079.14" x2="633.8" y2="1079.14" stroke="#e4e4e4" stroke-width="0.5" stroke-dasharray="2 1"/><line x1="448.4" y1="1056.08" x2="633.8" y2="1056.08" stroke="#e4e4e4" stroke-width="0.5" stroke-dasharray="2 1"/><line x1="448.4" y1="1033.02" x2="633.8" y2="1033.02" stroke="#e4e4e4" stroke-width="0.5" stroke-dasharray="2 1"/><line x1="448.4" y1="1009.96" x2="633.8" y2="1009.96" stroke="#e4e4e4" stroke-width="0.5" stroke-dasharray="2 1"/><line x1="448.4" y1="986.9" x2="633.8" y2="986.9" stroke="#e4e4e4" stroke-width="0.5" stroke-dasharray="2 1"/><line x1="480.5" y1="981.4" x2="480.5" y2="1102.2" stroke="#e4e4e4" stroke-width="0.5" stroke-dasharray="2 1"/><line x1="540.9" y1="981.4" x2="540.9" y2="1102.2" stroke="#e4e4e4" stroke-width="0.5" stroke-dasharray="2 1"/><line x1="601.4" y1="981.4" x2="601.4" y2="1102.2" stroke="#e4e4e4" stroke-width="0.5" stroke-dasharray="2 1"/><rect x="517.2" y="986.9" width="47.9" height="115.3" fill="#d9a13a"/><path d="M448.4 981.4V1102.2H633.8" fill="none" stroke="#6a6a6a" stroke-width="0.9"/><line x1="448.4" y1="1102.2" x2="449.9" y2="1102.2" stroke="#6a6a6a" stroke-width="0.6"/><line x1="448.4" y1="1079.14" x2="449.9" y2="1079.14" stroke="#6a6a6a" stroke-width="0.6"/><line x1="448.4" y1="1056.08" x2="449.9" y2="1056.08" stroke="#6a6a6a" stroke-width="0.6"/><line x1="448.4" y1="1033.02" x2="449.9" y2="1033.02" stroke="#6a6a6a" stroke-width="0.6"/><line x1="448.4" y1="1009.96" x2="449.9" y2="1009.96" stroke="#6a6a6a" stroke-width="0.6"/><line x1="448.4" y1="986.9" x2="449.9" y2="986.9" stroke="#6a6a6a" stroke-width="0.6"/><line x1="480.5" y1="1102.2" x2="480.5" y2="1100.7" stroke="#6a6a6a" stroke-width="0.6"/><line x1="540.9" y1="1102.2" x2="540.9" y2="1100.7" stroke="#6a6a6a" stroke-width="0.6"/><line x1="601.4" y1="1102.2" x2="601.4" y2="1100.7" stroke="#6a6a6a" stroke-width="0.6"/><text x="446.2" y="1104.3" font-size="5.9" font-family="Liberation Sans" text-anchor="end" fill="#333">0</text><text x="446.2" y="1081.24" font-size="5.9" font-family="Liberation Sans" text-anchor="end" fill="#333">2</text><text x="446.2" y="1058.18" font-size="5.9" font-family="Liberation Sans" text-anchor="end" fill="#333">4</text><text x="446.2" y="1035.12" font-size="5.9" font-family="Liberation Sans" text-anchor="end" fill="#333">6</text><text x="446.2" y="1012.06" font-size="5.9" font-family="Liberation Sans" text-anchor="end" fill="#333">8</text><text x="446.2" y="989" font-size="5.9" font-family="Liberation Sans" text-anchor="end" fill="#333">10</text><text x="480.5" y="1107.6" font-size="5.6" font-family="Liberation Sans" text-anchor="middle" fill="#333">A</text><text x="540.9" y="1107.6" font-size="5.6" font-family="Liberation Sans" text-anchor="middle" fill="#333">B</text><text x="601.4" y="1107.6" font-size="5.6" font-family="Liberation Sans" text-anchor="middle" fill="#333">C</text><text x="541" y="1114.2" font-size="5.55" font-family="Liberation Sans" text-anchor="middle" fill="#333">Importance Tier</text><g transform="translate(438.3 1041) rotate(-90)"><text x="0" y="0" font-size="5.55" font-family="Liberation Sans" text-anchor="middle" fill="#333">Win Rate (%)</text></g><rect x="486.6" y="974.3" width="3.2" height="5.4" fill="none" stroke="#777" stroke-width="0.5"/><text x="492.5" y="979.4" font-size="7.0" font-family="Liberation Sans" font-weight="bold" text-anchor="start" fill="#222" textLength="102.8" lengthAdjust="spacingAndGlyphs">Tier A Contacts Drive Real Wins</text></svg><svg class="a" style="left:724px;top:968px;text-rendering:geometricPrecision" width="273" height="151" viewBox="724 968 273 151"><rect x="724" y="968" width="273" height="151" fill="#fff"/><line x1="745.5" y1="1085.4" x2="993.9" y2="1085.4" stroke="#e4e4e4" stroke-width="0.5" stroke-dasharray="2 1"/><line x1="745.5" y1="1065.18" x2="993.9" y2="1065.18" stroke="#e4e4e4" stroke-width="0.5" stroke-dasharray="2 1"/><line x1="745.5" y1="1044.96" x2="993.9" y2="1044.96" stroke="#e4e4e4" stroke-width="0.5" stroke-dasharray="2 1"/><line x1="745.5" y1="1024.74" x2="993.9" y2="1024.74" stroke="#e4e4e4" stroke-width="0.5" stroke-dasharray="2 1"/><line x1="745.5" y1="1004.52" x2="993.9" y2="1004.52" stroke="#e4e4e4" stroke-width="0.5" stroke-dasharray="2 1"/><line x1="745.5" y1="984.3" x2="993.9" y2="984.3" stroke="#e4e4e4" stroke-width="0.5" stroke-dasharray="2 1"/><line x1="775.2" y1="979.5" x2="775.2" y2="1085.4" stroke="#e4e4e4" stroke-width="0.5" stroke-dasharray="2 1"/><line x1="822.4" y1="979.5" x2="822.4" y2="1085.4" stroke="#e4e4e4" stroke-width="0.5" stroke-dasharray="2 1"/><line x1="869.6" y1="979.5" x2="869.6" y2="1085.4" stroke="#e4e4e4" stroke-width="0.5" stroke-dasharray="2 1"/><line x1="916.7" y1="979.5" x2="916.7" y2="1085.4" stroke="#e4e4e4" stroke-width="0.5" stroke-dasharray="2 1"/><line x1="963.8" y1="979.5" x2="963.8" y2="1085.4" stroke="#e4e4e4" stroke-width="0.5" stroke-dasharray="2 1"/><rect x="756.6" y="994.41" width="37.2" height="90.99" fill="#e2ba5e"/><rect x="756.6" y="1065.18" width="37.2" height="20.22" fill="#8db3b5"/><rect x="803.8" y="995.52" width="37.2" height="89.88" fill="#e2ba5e"/><rect x="803.8" y="1029.19" width="37.2" height="56.21" fill="#8db3b5"/><rect x="851" y="984.3" width="37.2" height="101.1" fill="#e2ba5e"/><rect x="851" y="1068.52" width="37.2" height="16.88" fill="#8db3b5"/><rect x="898.1" y="1004.52" width="37.2" height="80.88" fill="#e2ba5e"/><rect x="898.1" y="1065.18" width="37.2" height="20.22" fill="#8db3b5"/><rect x="945.2" y="984.3" width="37.2" height="101.1" fill="#e2ba5e"/><rect x="945.2" y="1034.85" width="37.2" height="50.55" fill="#8db3b5"/><line x1="775.2" y1="979.5" x2="775.2" y2="1085.4" stroke="#888" stroke-opacity="0.18" stroke-width="0.4"/><line x1="822.4" y1="979.5" x2="822.4" y2="1085.4" stroke="#888" stroke-opacity="0.18" stroke-width="0.4"/><line x1="869.6" y1="979.5" x2="869.6" y2="1085.4" stroke="#888" stroke-opacity="0.18" stroke-width="0.4"/><line x1="916.7" y1="979.5" x2="916.7" y2="1085.4" stroke="#888" stroke-opacity="0.18" stroke-width="0.4"/><line x1="963.8" y1="979.5" x2="963.8" y2="1085.4" stroke="#888" stroke-opacity="0.18" stroke-width="0.4"/><path d="M745.5 979.5V1085.4H993.9" fill="none" stroke="#6a6a6a" stroke-width="0.9"/><line x1="745.5" y1="1085.4" x2="747.0" y2="1085.4" stroke="#6a6a6a" stroke-width="0.6"/><line x1="745.5" y1="1065.18" x2="747.0" y2="1065.18" stroke="#6a6a6a" stroke-width="0.6"/><line x1="745.5" y1="1044.96" x2="747.0" y2="1044.96" stroke="#6a6a6a" stroke-width="0.6"/><line x1="745.5" y1="1024.74" x2="747.0" y2="1024.74" stroke="#6a6a6a" stroke-width="0.6"/><line x1="745.5" y1="1004.52" x2="747.0" y2="1004.52" stroke="#6a6a6a" stroke-width="0.6"/><line x1="745.5" y1="984.3" x2="747.0" y2="984.3" stroke="#6a6a6a" stroke-width="0.6"/><line x1="775.2" y1="1085.4" x2="775.2" y2="1083.9" stroke="#6a6a6a" stroke-width="0.6"/><line x1="822.4" y1="1085.4" x2="822.4" y2="1083.9" stroke="#6a6a6a" stroke-width="0.6"/><line x1="869.6" y1="1085.4" x2="869.6" y2="1083.9" stroke="#6a6a6a" stroke-width="0.6"/><line x1="916.7" y1="1085.4" x2="916.7" y2="1083.9" stroke="#6a6a6a" stroke-width="0.6"/><line x1="963.8" y1="1085.4" x2="963.8" y2="1083.9" stroke="#6a6a6a" stroke-width="0.6"/><text x="743.4" y="1087.3" font-size="5.3" font-family="Liberation Sans" text-anchor="end" fill="#333">0</text><text x="743.4" y="1067.08" font-size="5.3" font-family="Liberation Sans" text-anchor="end" fill="#333">20</text><text x="743.4" y="1046.86" font-size="5.3" font-family="Liberation Sans" text-anchor="end" fill="#333">40</text><text x="743.4" y="1026.64" font-size="5.3" font-family="Liberation Sans" text-anchor="end" fill="#333">60</text><text x="743.4" y="1006.42" font-size="5.3" font-family="Liberation Sans" text-anchor="end" fill="#333">80</text><text x="743.4" y="986.2" font-size="5.3" font-family="Liberation Sans" text-anchor="end" fill="#333">100</text><g transform="translate(775.2 1092.62) rotate(-30)"><text x="0" y="1.9" font-size="5.4" font-family="Liberation Sans" text-anchor="middle" fill="#333">Email</text></g><g transform="translate(822.4 1097.62) rotate(-30)"><text x="0" y="1.9" font-size="5.4" font-family="Liberation Sans" text-anchor="middle" fill="#333">Instagram DM</text></g><g transform="translate(869.6 1094.38) rotate(-30)"><text x="0" y="1.9" font-size="5.4" font-family="Liberation Sans" text-anchor="middle" fill="#333">LinkedIn</text></g><g transform="translate(916.7 1091.95) rotate(-30)"><text x="0" y="1.9" font-size="5.4" font-family="Liberation Sans" text-anchor="middle" fill="#333">SMS</text></g><g transform="translate(963.8 1095.38) rotate(-30)"><text x="0" y="1.9" font-size="5.4" font-family="Liberation Sans" text-anchor="middle" fill="#333">WhatsApp</text></g><text x="869.6" y="1115" font-size="5.65" font-family="Liberation Sans" text-anchor="middle" fill="#333">Communication Channel</text><g transform="translate(731 1032) rotate(-90)"><text x="0" y="0" font-size="5.65" font-family="Liberation Sans" text-anchor="middle" fill="#333">Rate (%)</text></g><rect x="948.5" y="981.3" width="43.2" height="14.2" rx="1" fill="#fff" fill-opacity="0.8" stroke="#ddd" stroke-width="0.5"/><rect x="950.1" y="983.3" width="8.9" height="3.1" fill="#e2ba5e"/><rect x="950.1" y="989.8" width="8.9" height="3.1" fill="#8fc1e0"/><text x="961.8" y="986.6" font-size="4.4" font-family="Liberation Sans" text-anchor="start" fill="#333" textLength="22.8" lengthAdjust="spacingAndGlyphs">Reply Rate</text><text x="961.8" y="993" font-size="4.4" font-family="Liberation Sans" text-anchor="start" fill="#333" textLength="27.9" lengthAdjust="spacingAndGlyphs">Meeting Rate</text><rect x="785.4" y="971.6" width="3.2" height="5.4" fill="none" stroke="#777" stroke-width="0.5"/><text x="790.8" y="977" font-size="7.0" font-family="Liberation Sans" font-weight="bold" text-anchor="start" fill="#222" textLength="163" lengthAdjust="spacingAndGlyphs">Channel Power: Replies vs Meetings by Platform</text></svg><div class="a" style="left:1572px;top:927px;width:124px;height:21px;border-radius:11px;background:#fff;box-shadow:0 1px 3px rgba(60,64,67,.3),0 1px 1px rgba(60,64,67,.15)"></div><svg class="a" style="left:1579px;top:933px" width="10" height="10" viewBox="0 0 20 20"><rect x="1.5" y="1.5" width="17" height="17" rx="2.5" fill="none" stroke="#444746" stroke-width="2.4"/><rect x="1.5" y="1.5" width="17" height="5" fill="#444746"/><path d="M7.3 6v12.5M12.7 6v12.5" stroke="#444746" stroke-width="2.2"/></svg><div class="a" style="z-index:4;left:1595px;top:932.5px;font-size:8.6px;color:#1f1f1f;white-space:nowrap;-webkit-text-stroke:0.15px #1f1f1f">Convert to table</div><svg class="a" style="left:1665.5px;top:936.8px" width="6" height="3.5" viewBox="0 0 7 4"><path d="M0 0h7L3.5 4z" fill="#444746"/></svg><svg class="a" style="left:1682px;top:934px" width="7" height="7" viewBox="0 0 10 10"><path d="M1 1l8 8M9 1l-8 8" stroke="#444746" stroke-width="1.6"/></svg><div class="a" style="z-index:2;left:192px;top:112px;width:3px;height:1.5px;background:#222;opacity:0.85"></div><div class="a" style="z-index:2;left:554px;top:112px;width:6px;height:1px;background:#222;opacity:0.8"></div><div class="a" style="z-index:2;left:1539px;top:112px;width:3px;height:1.5px;background:#222;opacity:0.85"></div><div class="a" style="z-index:2;left:1576px;top:112px;width:1px;height:1px;background:#222;opacity:0.5"></div><div class="a" style="z-index:2;left:1603px;top:112px;width:1px;height:1px;background:#222;opacity:0.5"></div><div class="a" style="z-index:2;left:364px;top:112px;width:1px;height:1px;background:#222;opacity:0.4"></div></div></body></html>
